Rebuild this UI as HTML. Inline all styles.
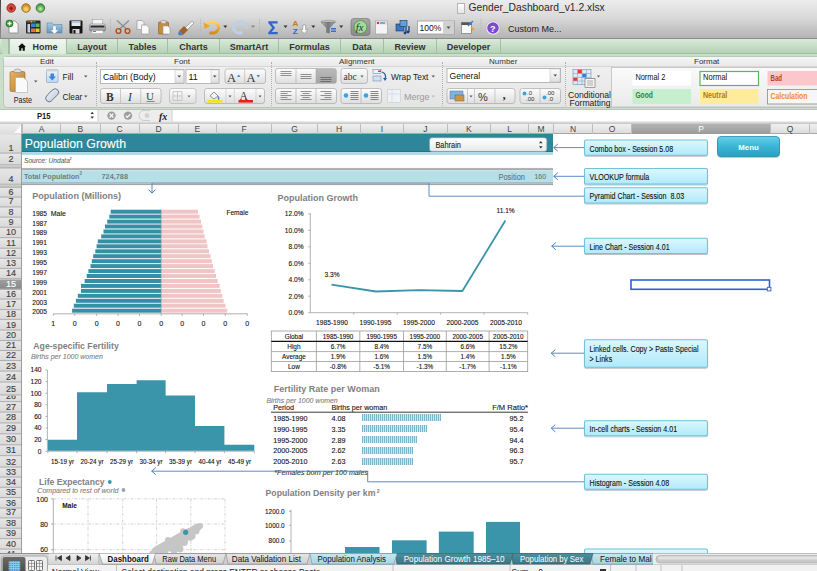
<!DOCTYPE html>
<html><head><meta charset="utf-8">
<style>
*{box-sizing:border-box;margin:0;padding:0}
html,body{width:817px;height:571px;overflow:hidden;background:#fff}
body{position:relative;font-family:"Liberation Sans",sans-serif;color:#222}
.a{position:absolute}
.t{position:absolute;white-space:nowrap;line-height:1}
/* chrome */
#top{left:0;top:0;width:817px;height:39px;background:linear-gradient(#ececec 0%,#dadada 45%,#b4b4b4 100%);border-bottom:1px solid #8a8a8a}
#tabs{left:0;top:39px;width:817px;height:15px;background:linear-gradient(#d9ead9,#b6d1b6);border-bottom:1px solid #9fbf9f}
.tab{position:absolute;top:39px;height:15px;border-right:1px solid #a3bea3;font-size:9px;font-weight:bold;color:#333;text-align:center;line-height:17.2px;overflow:hidden}
#ribbonbg{left:0;top:54px;width:817px;height:56px;background:#c9dfc9}
#ribbon{left:3px;top:56px;width:820px;height:52px;background:linear-gradient(#f2f2f2,#e4e4e4);border:1px solid #b9c9b9;border-radius:4px}
.glab{position:absolute;top:57px;font-size:8px;color:#333;line-height:10px}
.sep{position:absolute;top:62px;width:0;height:44px;border-left:1px dotted #b0b0b0}
.btn{position:absolute;background:linear-gradient(#fbfbfb,#dcdcdc);border:1px solid #a9a9a9;border-radius:3px}
.box{position:absolute;background:#fff;border:1px solid #a7a7a7}
#fbar{left:0;top:109px;width:817px;height:14px;background:#fff;border-top:1px solid #bdbdbd}
/* sheet */
#colhdr{left:0;top:123px;width:817px;height:11px;background:linear-gradient(#f0f0f0,#dcdcdc);border-top:1px solid #c9c9c9;border-bottom:1px solid #a8a8a8}
.ch{position:absolute;top:124px;height:10px;border-left:1px solid #bdbdbd;font-size:8.5px;color:#444;text-align:center;line-height:10px}
#rowhdr{left:0;top:134px;width:22px;height:419px;background:#dfdfdf;border-right:1px solid #a6a6a6}
.rh{position:absolute;left:0;width:22px;border-bottom:1px solid #b3b3b3;font-size:9.5px;color:#444;text-align:center;background:linear-gradient(#e6e6e6,#d9d9d9)}
</style></head>
<body>
<!-- ===== TOP TOOLBAR ===== -->
<div id="top" class="a"></div>
<div class="a" style="left:0;top:0;width:1px;height:110px;background:linear-gradient(#444,#888 30%,#8a9a8a)"></div>
<svg class="a" style="left:0;top:0" width="50" height="16" viewBox="0 0 50 16">
<defs>
<radialGradient id="tlr" cx="50%" cy="55%" r="50%"><stop offset="0" stop-color="#6a1a10"/><stop offset="0.35" stop-color="#b02a22"/><stop offset="0.6" stop-color="#e84a40"/><stop offset="1" stop-color="#c83a30"/></radialGradient>
<radialGradient id="tly" cx="50%" cy="65%" r="50%"><stop offset="0" stop-color="#ffe090"/><stop offset="0.5" stop-color="#f0b848"/><stop offset="1" stop-color="#d08a20"/></radialGradient>
<radialGradient id="tlg" cx="50%" cy="60%" r="50%"><stop offset="0" stop-color="#c8f0b0"/><stop offset="0.5" stop-color="#80c870"/><stop offset="1" stop-color="#3a9a3a"/></radialGradient>
</defs>
<circle cx="11.2" cy="8" r="4.3" fill="url(#tlr)" stroke="#7a3a30" stroke-width="0.8"/>
<circle cx="26" cy="8" r="4.3" fill="url(#tly)" stroke="#8a6a30" stroke-width="0.8"/>
<circle cx="40.4" cy="8" r="4.3" fill="url(#tlg)" stroke="#3a6a3a" stroke-width="0.8"/>
</svg>
<svg class="a" style="left:0;top:0" width="817" height="40" viewBox="0 0 817 40">
<defs>
<linearGradient id="gfold" x1="0" y1="0" x2="0" y2="1"><stop offset="0" stop-color="#a9cde6"/><stop offset="1" stop-color="#5f95bd"/></linearGradient>
<linearGradient id="gprint" x1="0" y1="0" x2="0" y2="1"><stop offset="0" stop-color="#eee"/><stop offset="1" stop-color="#888"/></linearGradient>
<linearGradient id="gund" x1="0" y1="0" x2="0" y2="1"><stop offset="0" stop-color="#ffd36a"/><stop offset="1" stop-color="#d98a10"/></linearGradient>
<linearGradient id="gfun" x1="0" y1="0" x2="1" y2="0"><stop offset="0" stop-color="#bdbdbd"/><stop offset="0.5" stop-color="#777"/><stop offset="1" stop-color="#aaa"/></linearGradient>
<linearGradient id="gfx" x1="0" y1="0" x2="0" y2="1"><stop offset="0" stop-color="#a8a8a8"/><stop offset="1" stop-color="#8a8a8a"/></linearGradient>
</defs>
<!-- new doc -->
<path d="M9 21h6l3 3v9h-9z" fill="#fafafa" stroke="#888" stroke-width="0.8"/>
<circle cx="9.5" cy="23.5" r="3.8" fill="#1d6b1d"/><circle cx="9.5" cy="23.5" r="3" fill="#3aa23a"/>
<path d="M7.5 23.5h4M9.5 21.5v4" stroke="#fff" stroke-width="1.3"/>
<!-- gallery -->
<rect x="26" y="20.5" width="14.5" height="13" rx="1" fill="#2a2a2a"/>
<rect x="27.5" y="24" width="2.5" height="8.5" fill="#bcd3ea"/>
<rect x="31" y="23.5" width="4" height="3.5" fill="#3b7fd6"/><rect x="35.5" y="23.5" width="4" height="3.5" fill="#5cb85c"/>
<rect x="31" y="28.5" width="4" height="3.5" fill="#e8742a"/><rect x="35.5" y="28.5" width="4" height="3.5" fill="#e8c82a"/>
<rect x="27.5" y="21" width="2" height="1.5" fill="#e33"/><rect x="30.5" y="21" width="2" height="1.5" fill="#ea3"/><rect x="33.5" y="21" width="2" height="1.5" fill="#3a3"/>
<!-- folder -->
<path d="M47 23h5l1 1.5h9v8.5h-15z" fill="url(#gfold)" stroke="#5a86a8" stroke-width="0.6"/>
<path d="M53 26v4h-2.5l4 4 4-4h-2.5v-4z" fill="#fff" stroke="#999" stroke-width="0.4"/>
<!-- save -->
<rect x="69.5" y="20.5" width="13" height="13" rx="1" fill="#151515"/>
<rect x="71.5" y="21" width="9" height="5" fill="#e8e8e8"/><rect x="72" y="21.5" width="8" height="1" fill="#7aa6d8"/>
<rect x="72.5" y="29" width="7" height="4.5" fill="#d8d8d8"/><rect x="73.5" y="30" width="2" height="3.5" fill="#151515"/>
<!-- print -->
<rect x="92.5" y="19.5" width="10" height="5" fill="#f4f4f4" stroke="#999" stroke-width="0.5"/>
<rect x="89.5" y="24" width="16" height="7" rx="1.5" fill="url(#gprint)" stroke="#666" stroke-width="0.5"/>
<rect x="90.5" y="25.5" width="14" height="2" fill="#2a2a2a"/>
<rect x="92" y="30.5" width="11" height="3" fill="#f8f8f8" stroke="#999" stroke-width="0.4"/><rect x="93" y="31" width="3" height="1" fill="#3a8ad8"/>
<!-- separators -->
<path d="M110.5 19v16M200.5 19v16M259.5 19v16M481 19v16" stroke="#b5b5b5" stroke-width="1" stroke-dasharray="1 1"/>
<!-- scissors -->
<path d="M117 20.5l10 9M129 20.5l-10 9" stroke="#8c8c8c" stroke-width="1.2"/>
<circle cx="118.5" cy="31" r="2.4" fill="none" stroke="#b0501e" stroke-width="1.4"/>
<circle cx="127.5" cy="31" r="2.4" fill="none" stroke="#b0501e" stroke-width="1.4"/>
<!-- copy -->
<path d="M137 20.5h5l2 2v7h-7z" fill="#f4f4f4" stroke="#999" stroke-width="0.7"/>
<path d="M141.5 25h5l2.5 2.5v6.5h-7.5z" fill="#fafafa" stroke="#999" stroke-width="0.7"/>
<!-- paste -->
<rect x="158.5" y="22" width="10" height="12" rx="1" fill="#c98b3c" stroke="#8a5a1e" stroke-width="0.6"/>
<rect x="161" y="20.5" width="5" height="3" rx="1" fill="#ddd" stroke="#888" stroke-width="0.5"/>
<path d="M163 26h5l2 2v6h-7z" fill="#fafafa" stroke="#999" stroke-width="0.6"/>
<!-- brush -->
<path d="M185 28l7-7 2 2-7 7z" fill="#f2f2f2" stroke="#888" stroke-width="0.6"/>
<path d="M179 31l5-5 4 4-5 5z" fill="#a0622a"/>
<path d="M179 31l4 4-3.5 0.5-1.5-1.5z" fill="#3a7fd8"/>
<!-- undo -->
<path d="M206 25.5a6.5 5.5 0 1 1 3.5 7" fill="none" stroke="url(#gund)" stroke-width="3"/>
<path d="M203.5 22.5l1 6.5 5.5-3z" fill="#e9a52a"/>
<path d="M223.3 25.6h4l-2 2.4z" fill="#333"/>
<!-- redo -->
<path d="M246 25.5a6.5 5.5 0 1 0 -3.5 7" fill="none" stroke="#bcd2e4" stroke-width="3"/>
<path d="M248.5 22.5l-1 6.5-5.5-3z" fill="#b8cfe2"/>
<path d="M251 25.6h4l-2 2.4z" fill="#8a8a8a"/>
<!-- sigma -->
<path d="M268.3 21.2h9.3v2.2h-5.9l3.4 4.3-3.4 4.4h6v2.2h-9.4v-1.8l3.9-4.8-3.9-4.7z" fill="#2f66d0"/>
<path d="M283.5 25.6h4l-2 2.4z" fill="#333"/>
<!-- sort -->
<text x="292.6" y="26.3" font-family="Liberation Sans" font-weight="bold" font-size="8" fill="#c8782a">A</text>
<text x="292.8" y="33.8" font-family="Liberation Sans" font-weight="bold" font-size="8" fill="#2f66d0">Z</text>
<path d="M302.8 25v4.5h-2.3l3.7 4 3.7-4h-2.3v-4.5z" fill="#fff" stroke="#8a8a8a" stroke-width="0.6"/>
<path d="M311.3 25.6h4l-2 2.4z" fill="#333"/>
<!-- filter -->
<ellipse cx="328.5" cy="21.8" rx="7.5" ry="1.5" fill="#d8d8d8" stroke="#777" stroke-width="0.5"/><path d="M321 22l5.5 6v4.5l3 0.5v-5l5.5-6z" fill="url(#gfun)" stroke="#666" stroke-width="0.5"/>
<rect x="331" y="28" width="5" height="1.4" fill="#2f66d0"/><rect x="331" y="30.5" width="5" height="1.4" fill="#2f66d0"/>
<path d="M339.2 25.6h4l-2 2.4z" fill="#333"/>
<!-- fx -->
<rect x="351" y="18.5" width="19" height="17" rx="3" fill="url(#gfx)" stroke="#6e6e6e" stroke-width="0.6"/>
<circle cx="360.5" cy="27" r="6.5" fill="#a6d89a" stroke="#4c8f45" stroke-width="0.8"/>
<text x="355.8" y="30.8" font-family="Liberation Serif" font-style="italic" font-size="10.5" fill="#234">fx</text>
<!-- doc icon -->
<rect x="375.5" y="21" width="12" height="13" fill="#f4f4f4" stroke="#999" stroke-width="0.6"/>
<rect x="376" y="21.5" width="11" height="3" fill="#ddd"/><rect x="377" y="22" width="2" height="2" fill="#d33"/><rect x="380" y="22" width="5" height="2" fill="#7aa6d8"/>
<!-- media -->
<rect x="396" y="24" width="8" height="7" fill="#3a78c8" stroke="#234" stroke-width="0.6"/>
<rect x="400" y="20.5" width="7" height="6" fill="#5fa0e0" stroke="#234" stroke-width="0.6"/>
<path d="M406 27v6M409 26v6" stroke="#1d3f7a" stroke-width="1.3"/><circle cx="405" cy="33" r="1.4" fill="#1d3f7a"/><circle cx="408" cy="32" r="1.4" fill="#1d3f7a"/>
<!-- zoom box -->
<rect x="417.5" y="21" width="37" height="13" fill="#fff" stroke="#9c9c9c" stroke-width="0.8"/>
<rect x="443" y="21.5" width="11" height="12" fill="#d0d0d0"/>
<path d="M446.5 26.5h4l-2 2.5z" fill="#555"/>
<text x="419.5" y="31" font-family="Liberation Sans" font-size="8.5" fill="#111">100%</text>
<!-- custom icon -->
<rect x="461.5" y="22.5" width="10" height="11" fill="#fafafa" stroke="#777" stroke-width="0.7"/>
<rect x="461.5" y="22.5" width="10" height="2.5" fill="#555"/>
<path d="M468 26l5-5" stroke="#3a7fd8" stroke-width="1.5"/><path d="M471 27l3 3" stroke="#e89a30" stroke-width="1.5"/>
<!-- help -->
<circle cx="493" cy="28" r="7" fill="#fff" stroke="#aaa" stroke-width="0.6"/>
<circle cx="493" cy="28" r="5.8" fill="#7c4bc9"/>
<text x="490" y="31.5" font-family="Liberation Sans" font-weight="bold" font-size="9" fill="#fff">?</text>
<text x="508" y="31.5" font-family="Liberation Sans" font-size="9" fill="#222">Custom Me...</text>
</svg>
<div class="t" style="left:468.5px;top:3.2px;font-size:10.3px;color:#2a2a2a">Gender_Dashboard_v1.2.xlsx</div>
<div class="a" style="left:457px;top:3px;width:8px;height:10.5px;background:linear-gradient(#fff,#e6e6e6);border:1px solid #b5b5b5"></div>

<!-- ===== TABS ===== -->
<div id="tabs" class="a"></div>
<div class="tab" style="left:2px;width:7px;background:#c5dcc5"></div>
<div class="tab" style="left:9px;width:58px;background:linear-gradient(#f0f6f0,#dcebdc);border-left:1px solid #a3bea3"><svg width="8" height="8" viewBox="0 0 8 8" style="vertical-align:-0.5px;margin-right:6px"><path d="M4 0.3L0 4h1.2v3.7h2.1V5.3h1.4v2.4h2.1V4H8z" fill="#111"/></svg>Home</div>
<div class="tab" style="left:67px;width:51px">Layout</div>
<div class="tab" style="left:118px;width:50px">Tables</div>
<div class="tab" style="left:168px;width:52px">Charts</div>
<div class="tab" style="left:220px;width:59px">SmartArt</div>
<div class="tab" style="left:279px;width:62px">Formulas</div>
<div class="tab" style="left:341px;width:43px">Data</div>
<div class="tab" style="left:384px;width:53px">Review</div>
<div class="tab" style="left:437px;width:64px">Developer</div>

<!-- ===== RIBBON ===== -->
<div id="ribbonbg" class="a"></div>
<div id="ribbon" class="a"></div>
<div class="a" style="left:4px;top:57px;width:813px;height:10px;background:linear-gradient(#f6f6f6,#e9e9e9);border-bottom:1px solid #d6d6d6"></div>


<div class="glab" style="left:40px;top:57px">Edit</div>
<div class="glab" style="left:174px;top:57px">Font</div>
<div class="glab" style="left:339px;top:57px">Alignment</div>
<div class="glab" style="left:489px;top:57px">Number</div>
<div class="glab" style="left:694px;top:57px">Format</div>
<div class="sep" style="left:96px"></div>
<div class="sep" style="left:271px"></div>
<div class="sep" style="left:442px"></div>
<div class="sep" style="left:565px"></div>
<svg class="a" style="left:0;top:56px" width="817" height="54" viewBox="0 56 817 54">
<defs>
<linearGradient id="gclip" x1="0" y1="0" x2="1" y2="1"><stop offset="0" stop-color="#e9b463"/><stop offset="1" stop-color="#b57a2c"/></linearGradient>
<linearGradient id="gers" x1="0" y1="0" x2="1" y2="1"><stop offset="0" stop-color="#f4f8fc"/><stop offset="1" stop-color="#b8c8d8"/></linearGradient>
<linearGradient id="gfill" x1="0" y1="0" x2="0" y2="1"><stop offset="0" stop-color="#f0f6fc"/><stop offset="1" stop-color="#bcd8f2"/></linearGradient>
<linearGradient id="gbtn" x1="0" y1="0" x2="0" y2="1"><stop offset="0" stop-color="#fdfdfd"/><stop offset="1" stop-color="#dedede"/></linearGradient>
<linearGradient id="gbtnd" x1="0" y1="0" x2="0" y2="1"><stop offset="0" stop-color="#b9b9b9"/><stop offset="1" stop-color="#a5a5a5"/></linearGradient>
<linearGradient id="gcf" x1="0" y1="0" x2="0" y2="1"><stop offset="0" stop-color="#fafafa"/><stop offset="1" stop-color="#eaeaea"/></linearGradient>
</defs>
<!-- Paste -->
<rect x="10" y="71.5" width="15" height="20" rx="1.5" fill="url(#gclip)" stroke="#9a6a28" stroke-width="0.6"/>
<path d="M14 72.5h7v-1.5a3.5 2 0 0 0 -7 0z" fill="#ddd" stroke="#888" stroke-width="0.6"/>
<path d="M15.5 77.5h8l4 4v11h-12z" fill="#fafafa" stroke="#aaa" stroke-width="0.6"/>
<path d="M34 80.5h3.5l-1.75 2z" fill="#555"/>
<text x="13.7" y="103" font-family="Liberation Sans" font-size="8.6" fill="#222" textLength="18.4" lengthAdjust="spacingAndGlyphs">Paste</text>
<!-- Fill -->
<rect x="46.5" y="69.5" width="11.5" height="13" rx="1" fill="url(#gfill)" stroke="#7e9cb8" stroke-width="0.6"/>
<rect x="46.5" y="69.5" width="11.5" height="2" fill="#d5d5d5"/>
<path d="M50.5 73.5h3.5v3h2l-3.75 4-3.75-4h2z" fill="#3c86d8"/>
<text x="62.5" y="79.5" font-family="Liberation Sans" font-size="8.5" fill="#222">Fill</text>
<path d="M84 75.5h3.5l-1.75 2z" fill="#555"/>
<!-- Clear -->
<path d="M49.8 92.3l3.2-2.6a3.4 3.4 0 0 1 4.8 4.8l-6.4 6.4a3.4 3.4 0 0 1 -4.8 -4.8z" fill="url(#gers)" stroke="#5a6a7a" stroke-width="0.9"/>
<text x="62.5" y="100" font-family="Liberation Sans" font-size="8.3" fill="#222">Clear</text>
<path d="M84 95.5h3.5l-1.75 2z" fill="#555"/>
<!-- Font name -->
<rect x="100.5" y="69.5" width="83.5" height="14" fill="#fff" stroke="#a9a9a9" stroke-width="0.8"/>
<rect x="175" y="70" width="8.5" height="13" fill="url(#gbtn)" stroke="#bdbdbd" stroke-width="0.5"/>
<path d="M177.5 75.5h3.5l-1.75 2z" fill="#444"/>
<text x="103" y="80" font-family="Liberation Sans" font-size="8.7" fill="#111">Calibri (Body)</text>
<rect x="186" y="69.5" width="33" height="14" fill="#fff" stroke="#a9a9a9" stroke-width="0.8"/>
<rect x="211" y="70" width="7.5" height="13" fill="url(#gbtn)" stroke="#bdbdbd" stroke-width="0.5"/>
<path d="M213 75.5h3.5l-1.75 2z" fill="#444"/>
<text x="188.5" y="80" font-family="Liberation Sans" font-size="9" fill="#111">11</text>
<rect x="225" y="69" width="40.5" height="14.5" rx="2.5" fill="url(#gbtn)" stroke="#a9a9a9" stroke-width="0.7"/>
<path d="M244.7 69v14.5" stroke="#b9b9b9" stroke-width="0.7"/>
<text x="227" y="81.5" font-family="Liberation Serif" font-size="12.5" fill="#333">A</text>
<path d="M237 77h3.5l-1.75-2.5z" fill="#3a8ad8"/>
<text x="246.5" y="81.5" font-family="Liberation Serif" font-size="12.5" fill="#333">A</text>
<path d="M256.5 75h3.5l-1.75 2.5z" fill="#3a8ad8"/>
<!-- B I U -->
<rect x="100.5" y="88.5" width="60.5" height="15" rx="2.5" fill="url(#gbtn)" stroke="#a9a9a9" stroke-width="0.7"/>
<path d="M120.5 88.5v15M140.7 88.5v15" stroke="#b9b9b9" stroke-width="0.7"/>
<text x="106" y="101" font-family="Liberation Serif" font-weight="bold" font-size="11.5" fill="#333">B</text>
<text x="128" y="101" font-family="Liberation Serif" font-style="italic" font-size="11.5" fill="#333">I</text>
<text x="146" y="100.3" font-family="Liberation Serif" font-size="11" fill="#444">U</text>
<path d="M146.5 101.5h8" stroke="#444" stroke-width="0.6"/>
<!-- borders -->
<rect x="169.5" y="88.5" width="26.5" height="15" rx="2.5" fill="url(#gbtn)" stroke="#b5b5b5" stroke-width="0.7"/>
<path d="M173 91.5h9v9h-9zM177.5 91.5v9M173 96h9" fill="none" stroke="#bbb" stroke-width="0.7"/>
<path d="M187.5 95.5h3l-1.5 2z" fill="#666"/>
<!-- fill color / font color -->
<rect x="204.5" y="88.5" width="60" height="15" rx="2.5" fill="url(#gbtn)" stroke="#a9a9a9" stroke-width="0.7"/>
<path d="M226 88.5v15M234.3 88.5v15M256 88.5v15" stroke="#c5c5c5" stroke-width="0.6"/>
<path d="M210 96l4-4 4 4-4 3z" fill="#f4f4f4" stroke="#555" stroke-width="0.6"/>
<path d="M218 96.5q1.5 2 0 3" stroke="#3a7fd8" stroke-width="1.4" fill="none"/>
<rect x="207.5" y="100" width="15" height="2.6" fill="#f7e416"/>
<path d="M228.5 95.5h3l-1.5 2z" fill="#555"/>
<text x="239.5" y="99.8" font-family="Liberation Serif" font-size="11.5" fill="#333">A</text>
<rect x="238.5" y="100" width="14.5" height="2.6" fill="#e2231a"/>
<path d="M258.5 95.5h3l-1.5 2z" fill="#555"/>
<!-- alignment row1 -->
<rect x="275.5" y="68.5" width="61" height="15" rx="2.5" fill="url(#gbtn)" stroke="#a9a9a9" stroke-width="0.7"/>
<rect x="316" y="69" width="20" height="14" fill="url(#gbtnd)"/>
<path d="M296 68.5v15M316 68.5v15" stroke="#b0b0b0" stroke-width="0.7"/>
<path d="M280.5 71.5h11M280.5 73.5h11M280.5 75.5h11" stroke="#666" stroke-width="0.7"/>
<path d="M300.5 74.5h11M300.5 76.5h11M300.5 78.5h11" stroke="#666" stroke-width="0.7"/>
<path d="M320.5 77.5h11M320.5 79.5h11M320.5 81.5h11" stroke="#555" stroke-width="0.7"/>
<rect x="341" y="68.5" width="26.5" height="15" rx="2.5" fill="url(#gbtn)" stroke="#a9a9a9" stroke-width="0.7"/>
<text x="343.5" y="79.5" font-family="Liberation Serif" font-size="9.5" fill="#333">abc</text>
<path d="M360.5 75.5h3l-1.5 2z" fill="#555"/>
<rect x="373" y="69.5" width="8" height="4" fill="#eef3f8" stroke="#6f8fb0" stroke-width="0.6"/>
<rect x="373" y="76" width="8" height="5" fill="#cfe0f0" stroke="#6f8fb0" stroke-width="0.6"/>
<path d="M382 72q5 2 3 7" stroke="#2e5faa" stroke-width="1.3" fill="none"/><path d="M383 78l2 3 2-3z" fill="#2e5faa"/>
<rect x="378" y="70.5" width="3" height="1.5" fill="#e33"/>
<text x="391" y="80" font-family="Liberation Sans" font-size="8.4" fill="#222">Wrap Text</text>
<path d="M431.5 75.5h3.5l-1.75 2z" fill="#555"/>
<!-- alignment row2 -->
<rect x="275.5" y="88.5" width="61" height="15" rx="2.5" fill="url(#gbtn)" stroke="#a9a9a9" stroke-width="0.7"/>
<path d="M296 88.5v15M316 88.5v15" stroke="#b0b0b0" stroke-width="0.7"/>
<path d="M280.5 91.5h11M280.5 93.5h7M280.5 95.5h11M280.5 97.5h7M280.5 99.5h11" stroke="#666" stroke-width="0.7"/>
<path d="M300.5 91.5h11M302.5 93.5h7M300.5 95.5h11M302.5 97.5h7M300.5 99.5h11" stroke="#666" stroke-width="0.7"/>
<path d="M320.5 91.5h11M324.5 93.5h7M320.5 95.5h11M324.5 97.5h7M320.5 99.5h11" stroke="#666" stroke-width="0.7"/>
<rect x="341" y="88.5" width="40.5" height="15" rx="2.5" fill="url(#gbtn)" stroke="#a9a9a9" stroke-width="0.7"/>
<path d="M361 88.5v15" stroke="#b0b0b0" stroke-width="0.7"/>
<path d="M350.5 91.5h8M350.5 93.5h8M350.5 95.5h8M350.5 97.5h8M350.5 99.5h8" stroke="#555" stroke-width="0.7"/>
<circle cx="346" cy="95.5" r="2.3" fill="#3ba3e0"/>
<path d="M370.5 91.5h8M370.5 93.5h8M370.5 95.5h8M370.5 97.5h8M370.5 99.5h8" stroke="#555" stroke-width="0.7"/>
<circle cx="366" cy="95.5" r="2.3" fill="#3ba3e0"/>
<rect x="387.5" y="89.5" width="13" height="13" fill="#eef2f6" stroke="#c5ccd4" stroke-width="0.6"/>
<path d="M387.5 94h13M392 89.5v13" stroke="#c9d3dd" stroke-width="0.6"/>
<text x="404" y="100" font-family="Liberation Sans" font-size="9" fill="#9a9a9a">Merge</text>
<path d="M431.5 95.5h3.5l-1.75 2z" fill="#bbb"/>
<!-- number -->
<rect x="447" y="68.5" width="113.5" height="14" fill="#fff" stroke="#a9a9a9" stroke-width="0.8"/>
<rect x="550" y="69" width="10" height="13" fill="url(#gbtn)" stroke="#bdbdbd" stroke-width="0.5"/>
<path d="M553.5 74.5h3.5l-1.75 2z" fill="#444"/>
<text x="449.5" y="79" font-family="Liberation Sans" font-size="8.6" fill="#111">General</text>
<rect x="447" y="88.5" width="68" height="15" rx="2.5" fill="url(#gbtn)" stroke="#a9a9a9" stroke-width="0.7"/>
<path d="M467.5 88.5v15M474.5 88.5v15M495 88.5v15" stroke="#b9b9b9" stroke-width="0.7"/>
<rect x="450" y="91" width="13" height="8" fill="#7eb3e0" stroke="#4a78a8" stroke-width="0.5"/>
<rect x="455" y="95" width="9" height="6" fill="#c8964a" stroke="#8a5a1e" stroke-width="0.5"/>
<path d="M469.5 95.5h3l-1.5 2z" fill="#555"/>
<text x="478" y="100.5" font-family="Liberation Sans" font-size="11" fill="#333">%</text>
<text x="502.5" y="99" font-family="Liberation Serif" font-weight="bold" font-size="13" fill="#333">,</text>
<rect x="520" y="88.5" width="40.5" height="15" rx="2.5" fill="url(#gbtn)" stroke="#a9a9a9" stroke-width="0.7"/>
<path d="M540 88.5v15" stroke="#b9b9b9" stroke-width="0.7"/>
<circle cx="524.5" cy="93.5" r="2" fill="#3ba3e0"/>
<text x="527" y="95" font-family="Liberation Sans" font-size="6" fill="#333">.0</text>
<text x="526" y="101" font-family="Liberation Sans" font-size="6" fill="#333">.00</text>
<circle cx="544.5" cy="97.5" r="2" fill="#3ba3e0"/>
<text x="546" y="95" font-family="Liberation Sans" font-size="6" fill="#333">.00</text>
<text x="548" y="101" font-family="Liberation Sans" font-size="6" fill="#333">.0</text>
<!-- conditional formatting -->
<rect x="573" y="69.5" width="18" height="15" fill="#ddeaf6" stroke="#6f8fb0" stroke-width="0.6"/>
<path d="M573 73.5h18M573 77.5h18M573 81h18M577.5 69.5v15M582 69.5v15M586.5 69.5v15" stroke="#8aa8c8" stroke-width="0.6"/>
<rect x="577.8" y="69.8" width="4" height="3.5" fill="#e33"/><rect x="573.3" y="77.8" width="4" height="3" fill="#e33"/><rect x="582.3" y="73.8" width="4" height="3.5" fill="#3a7fd8"/>
<rect x="585" y="78.5" width="10" height="9" fill="#f4f4f4" stroke="#666" stroke-width="0.6"/>
<path d="M587 81h6M587 83h6M587 85h6" stroke="#666" stroke-width="0.5"/>
<path d="M597 75.5h3l-1.5 2z" fill="#555"/>
<text x="568" y="98" font-family="Liberation Sans" font-size="8.6" fill="#222">Conditional</text>
<text x="569.5" y="106" font-family="Liberation Sans" font-size="8.6" fill="#222">Formatting</text>
<!-- format gallery -->
<rect x="611.5" y="67.5" width="220" height="39.5" fill="url(#gcf)" stroke="#bdbdbd" stroke-width="0.8"/>
<rect x="632.5" y="71" width="58.5" height="14.5" fill="#fff"/>
<text x="635.4" y="80.3" font-family="Liberation Sans" font-size="8.4" fill="#111" textLength="30" lengthAdjust="spacingAndGlyphs">Normal 2</text>
<rect x="700" y="71.5" width="58.5" height="14" fill="#fff" stroke="#5fb35f" stroke-width="1.2"/>
<text x="703" y="80.3" font-family="Liberation Sans" font-size="8.4" fill="#111" textLength="24.3" lengthAdjust="spacingAndGlyphs">Normal</text>
<rect x="767.5" y="71" width="60" height="14.5" fill="#fcc6cd"/>
<text x="770.6" y="80.6" font-family="Liberation Sans" font-weight="bold" font-size="8.4" fill="#c0392b" textLength="11.5" lengthAdjust="spacingAndGlyphs">Bad</text>
<rect x="632.5" y="89" width="58.5" height="15" fill="#c6efce"/>
<text x="635.4" y="98.3" font-family="Liberation Sans" font-weight="bold" font-size="8.2" fill="#3d7a3d" textLength="17.5" lengthAdjust="spacingAndGlyphs">Good</text>
<rect x="700" y="89" width="58.5" height="15" fill="#ffeb9c"/>
<text x="703" y="98.3" font-family="Liberation Sans" font-weight="bold" font-size="8.2" fill="#b07a10" textLength="24.3" lengthAdjust="spacingAndGlyphs">Neutral</text>
<rect x="767.5" y="89.5" width="60" height="14.5" fill="#f6f6f6" stroke="#8a8a8a" stroke-width="0.8"/>
<text x="770.5" y="98.5" font-family="Liberation Sans" font-weight="bold" font-size="8.6" fill="#f08a1c" textLength="37" lengthAdjust="spacingAndGlyphs">Calculation</text>
</svg>

<!-- ===== FORMULA BAR ===== -->

<svg class="a" style="left:0;top:109px" width="817" height="15" viewBox="0 109 817 15">
<rect x="0" y="109" width="817" height="13" fill="#fff"/>
<rect x="98" y="109.5" width="74" height="12" fill="#ededed"/>
<rect x="0" y="121.5" width="817" height="2" fill="#d8d8d8"/>
<path d="M0 109.5h817" stroke="#c0c0c0" stroke-width="1"/>
<path d="M98 109.5v12M172 109.5v12" stroke="#c6c6c6" stroke-width="0.8"/>
<text x="37" y="119.3" font-family="Liberation Sans" font-size="9" font-weight="bold" fill="#222" textLength="13.6" lengthAdjust="spacingAndGlyphs">P15</text>
<path d="M90.5 114l1.7-2.2 1.7 2.2zM90.5 116.5l1.7 2.2 1.7-2.2z" fill="#333"/>
<circle cx="111.5" cy="115.6" r="4.2" fill="#9d9d9d"/><path d="M109.6 113.7l3.8 3.8M113.4 113.7l-3.8 3.8" stroke="#fff" stroke-width="1.2"/>
<circle cx="128" cy="115.6" r="4.2" fill="#9d9d9d"/><path d="M125.8 115.6l1.6 1.8 2.9-3.3" stroke="#fff" stroke-width="1.2" fill="none"/>
<path d="M150 110.5h-6a5 5 0 0 0 0 10h6" fill="none" stroke="#c4c4c4" stroke-width="0.8"/>
<circle cx="147" cy="115.6" r="2.5" fill="#d4d4d4"/>
<text x="159" y="119.6" font-family="Liberation Serif" font-style="italic" font-weight="bold" font-size="10" fill="#222">fx</text>
</svg>


<!-- ===== SHEET ===== -->
<div id="colhdr" class="a"></div>
<svg id="rhsvg" class="a" style="left:0;top:134px" width="23" height="419" viewBox="0 134 23 419">
<defs><linearGradient id="grh" x1="0" y1="0" x2="0" y2="1"><stop offset="0" stop-color="#e6e6e6"/><stop offset="1" stop-color="#d8d8d8"/></linearGradient>
<linearGradient id="grhs" x1="0" y1="0" x2="0" y2="1"><stop offset="0" stop-color="#9e9e9e"/><stop offset="1" stop-color="#888"/></linearGradient></defs>
<rect x="0" y="134" width="22" height="419" fill="#dcdcdc"/>
<rect x="0" y="134.6" width="21.5" height="18.8" fill="url(#grh)"/>
<path d="M0 153.0H21.5" stroke="#ababab" stroke-width="0.9"/>
<clipPath id="rc0"><rect x="0" y="134.5" width="22" height="18.9"/></clipPath>
<text x="11" y="150.5" text-anchor="middle" font-family="Liberation Sans" font-size="9" fill="#444" stroke="#444" stroke-width="0.15" clip-path="url(#rc0)">1</text>
<rect x="0" y="154.0" width="21.5" height="11.2" fill="url(#grh)"/>
<path d="M0 164.8H21.5" stroke="#ababab" stroke-width="0.9"/>
<clipPath id="rc1"><rect x="0" y="153.9" width="22" height="11.3"/></clipPath>
<text x="11" y="162.3" text-anchor="middle" font-family="Liberation Sans" font-size="9" fill="#444" stroke="#444" stroke-width="0.15" clip-path="url(#rc1)">2</text>
<rect x="0" y="165.8" width="21.5" height="2.5" fill="#c9c9c9"/>
<path d="M0 167.9H21.5" stroke="#ababab" stroke-width="0.9"/>
<rect x="0" y="168.9" width="21.5" height="15.7" fill="url(#grh)"/>
<path d="M0 184.2H21.5" stroke="#ababab" stroke-width="0.9"/>
<clipPath id="rc3"><rect x="0" y="168.8" width="22" height="15.8"/></clipPath>
<text x="11" y="181.7" text-anchor="middle" font-family="Liberation Sans" font-size="9" fill="#444" stroke="#444" stroke-width="0.15" clip-path="url(#rc3)">4</text>
<rect x="0" y="185.2" width="21.5" height="2.4" fill="#c9c9c9"/>
<path d="M0 187.2H21.5" stroke="#ababab" stroke-width="0.9"/>
<rect x="0" y="188.2" width="21.5" height="9.2" fill="url(#grh)"/>
<path d="M0 197.0H21.5" stroke="#ababab" stroke-width="0.9"/>
<clipPath id="rc5"><rect x="0" y="188.1" width="22" height="9.3"/></clipPath>
<text x="11" y="194.5" text-anchor="middle" font-family="Liberation Sans" font-size="9" fill="#444" stroke="#444" stroke-width="0.15" clip-path="url(#rc5)">6</text>
<rect x="0" y="198.0" width="21.5" height="9.3" fill="url(#grh)"/>
<path d="M0 206.9H21.5" stroke="#ababab" stroke-width="0.9"/>
<clipPath id="rc6"><rect x="0" y="197.9" width="22" height="9.4"/></clipPath>
<text x="11" y="204.4" text-anchor="middle" font-family="Liberation Sans" font-size="9" fill="#444" stroke="#444" stroke-width="0.15" clip-path="url(#rc6)">7</text>
<rect x="0" y="207.9" width="21.5" height="9.6" fill="url(#grh)"/>
<path d="M0 217.1H21.5" stroke="#ababab" stroke-width="0.9"/>
<clipPath id="rc7"><rect x="0" y="207.8" width="22" height="9.7"/></clipPath>
<text x="11" y="214.6" text-anchor="middle" font-family="Liberation Sans" font-size="9" fill="#444" stroke="#444" stroke-width="0.15" clip-path="url(#rc7)">8</text>
<rect x="0" y="218.1" width="21.5" height="9.5" fill="url(#grh)"/>
<path d="M0 227.2H21.5" stroke="#ababab" stroke-width="0.9"/>
<clipPath id="rc8"><rect x="0" y="218.0" width="22" height="9.6"/></clipPath>
<text x="11" y="224.7" text-anchor="middle" font-family="Liberation Sans" font-size="9" fill="#444" stroke="#444" stroke-width="0.15" clip-path="url(#rc8)">9</text>
<rect x="0" y="228.2" width="21.5" height="9.8" fill="url(#grh)"/>
<path d="M0 237.6H21.5" stroke="#ababab" stroke-width="0.9"/>
<clipPath id="rc9"><rect x="0" y="228.1" width="22" height="9.9"/></clipPath>
<text x="11" y="235.1" text-anchor="middle" font-family="Liberation Sans" font-size="9" fill="#444" stroke="#444" stroke-width="0.15" clip-path="url(#rc9)">10</text>
<rect x="0" y="238.6" width="21.5" height="10.0" fill="url(#grh)"/>
<path d="M0 248.2H21.5" stroke="#ababab" stroke-width="0.9"/>
<clipPath id="rc10"><rect x="0" y="238.5" width="22" height="10.1"/></clipPath>
<text x="11" y="245.7" text-anchor="middle" font-family="Liberation Sans" font-size="9" fill="#444" stroke="#444" stroke-width="0.15" clip-path="url(#rc10)">11</text>
<rect x="0" y="249.2" width="21.5" height="9.4" fill="url(#grh)"/>
<path d="M0 258.2H21.5" stroke="#ababab" stroke-width="0.9"/>
<clipPath id="rc11"><rect x="0" y="249.1" width="22" height="9.5"/></clipPath>
<text x="11" y="255.7" text-anchor="middle" font-family="Liberation Sans" font-size="9" fill="#444" stroke="#444" stroke-width="0.15" clip-path="url(#rc11)">12</text>
<rect x="0" y="259.2" width="21.5" height="9.6" fill="url(#grh)"/>
<path d="M0 268.4H21.5" stroke="#ababab" stroke-width="0.9"/>
<clipPath id="rc12"><rect x="0" y="259.1" width="22" height="9.7"/></clipPath>
<text x="11" y="265.9" text-anchor="middle" font-family="Liberation Sans" font-size="9" fill="#444" stroke="#444" stroke-width="0.15" clip-path="url(#rc12)">13</text>
<rect x="0" y="269.4" width="21.5" height="9.6" fill="url(#grh)"/>
<path d="M0 278.6H21.5" stroke="#ababab" stroke-width="0.9"/>
<clipPath id="rc13"><rect x="0" y="269.3" width="22" height="9.7"/></clipPath>
<text x="11" y="276.1" text-anchor="middle" font-family="Liberation Sans" font-size="9" fill="#444" stroke="#444" stroke-width="0.15" clip-path="url(#rc13)">14</text>
<rect x="0" y="279.6" width="21.5" height="9.8" fill="url(#grhs)"/>
<path d="M0 289.0H21.5" stroke="#ababab" stroke-width="0.9"/>
<clipPath id="rc14"><rect x="0" y="279.5" width="22" height="9.9"/></clipPath>
<text x="11" y="286.5" text-anchor="middle" font-family="Liberation Sans" font-size="9" fill="#fff" stroke="#fff" stroke-width="0.15" clip-path="url(#rc14)">15</text>
<rect x="0" y="290.0" width="21.5" height="9.4" fill="url(#grh)"/>
<path d="M0 299.0H21.5" stroke="#ababab" stroke-width="0.9"/>
<clipPath id="rc15"><rect x="0" y="289.9" width="22" height="9.5"/></clipPath>
<text x="11" y="296.5" text-anchor="middle" font-family="Liberation Sans" font-size="9" fill="#444" stroke="#444" stroke-width="0.15" clip-path="url(#rc15)">16</text>
<rect x="0" y="300.0" width="21.5" height="10.0" fill="url(#grh)"/>
<path d="M0 309.6H21.5" stroke="#ababab" stroke-width="0.9"/>
<clipPath id="rc16"><rect x="0" y="299.9" width="22" height="10.1"/></clipPath>
<text x="11" y="307.1" text-anchor="middle" font-family="Liberation Sans" font-size="9" fill="#444" stroke="#444" stroke-width="0.15" clip-path="url(#rc16)">17</text>
<rect x="0" y="310.6" width="21.5" height="9.2" fill="url(#grh)"/>
<path d="M0 319.4H21.5" stroke="#ababab" stroke-width="0.9"/>
<clipPath id="rc17"><rect x="0" y="310.5" width="22" height="9.3"/></clipPath>
<text x="11" y="316.9" text-anchor="middle" font-family="Liberation Sans" font-size="9" fill="#444" stroke="#444" stroke-width="0.15" clip-path="url(#rc17)">18</text>
<rect x="0" y="320.4" width="21.5" height="10.0" fill="url(#grh)"/>
<path d="M0 330.0H21.5" stroke="#ababab" stroke-width="0.9"/>
<clipPath id="rc18"><rect x="0" y="320.3" width="22" height="10.1"/></clipPath>
<text x="11" y="327.5" text-anchor="middle" font-family="Liberation Sans" font-size="9" fill="#444" stroke="#444" stroke-width="0.15" clip-path="url(#rc18)">19</text>
<rect x="0" y="331.0" width="21.5" height="9.9" fill="url(#grh)"/>
<path d="M0 340.5H21.5" stroke="#ababab" stroke-width="0.9"/>
<clipPath id="rc19"><rect x="0" y="330.9" width="22" height="10.0"/></clipPath>
<text x="11" y="338.0" text-anchor="middle" font-family="Liberation Sans" font-size="9" fill="#444" stroke="#444" stroke-width="0.15" clip-path="url(#rc19)">20</text>
<rect x="0" y="341.5" width="21.5" height="9.4" fill="url(#grh)"/>
<path d="M0 350.5H21.5" stroke="#ababab" stroke-width="0.9"/>
<clipPath id="rc20"><rect x="0" y="341.4" width="22" height="9.5"/></clipPath>
<text x="11" y="348.0" text-anchor="middle" font-family="Liberation Sans" font-size="9" fill="#444" stroke="#444" stroke-width="0.15" clip-path="url(#rc20)">21</text>
<rect x="0" y="351.5" width="21.5" height="9.4" fill="url(#grh)"/>
<path d="M0 360.5H21.5" stroke="#ababab" stroke-width="0.9"/>
<clipPath id="rc21"><rect x="0" y="351.4" width="22" height="9.5"/></clipPath>
<text x="11" y="358.0" text-anchor="middle" font-family="Liberation Sans" font-size="9" fill="#444" stroke="#444" stroke-width="0.15" clip-path="url(#rc21)">22</text>
<rect x="0" y="361.5" width="21.5" height="9.9" fill="url(#grh)"/>
<path d="M0 371.0H21.5" stroke="#ababab" stroke-width="0.9"/>
<clipPath id="rc22"><rect x="0" y="361.4" width="22" height="10.0"/></clipPath>
<text x="11" y="368.5" text-anchor="middle" font-family="Liberation Sans" font-size="9" fill="#444" stroke="#444" stroke-width="0.15" clip-path="url(#rc22)">23</text>
<rect x="0" y="372.0" width="21.5" height="10.4" fill="url(#grh)"/>
<path d="M0 382.0H21.5" stroke="#ababab" stroke-width="0.9"/>
<clipPath id="rc23"><rect x="0" y="371.9" width="22" height="10.5"/></clipPath>
<text x="11" y="379.5" text-anchor="middle" font-family="Liberation Sans" font-size="9" fill="#444" stroke="#444" stroke-width="0.15" clip-path="url(#rc23)">24</text>
<rect x="0" y="383.0" width="21.5" height="12.3" fill="url(#grh)"/>
<path d="M0 394.9H21.5" stroke="#ababab" stroke-width="0.9"/>
<clipPath id="rc24"><rect x="0" y="382.9" width="22" height="12.4"/></clipPath>
<text x="11" y="392.4" text-anchor="middle" font-family="Liberation Sans" font-size="9" fill="#444" stroke="#444" stroke-width="0.15" clip-path="url(#rc24)">25</text>
<rect x="0" y="395.9" width="21.5" height="6.1" fill="url(#grh)"/>
<path d="M0 401.6H21.5" stroke="#ababab" stroke-width="0.9"/>
<clipPath id="rc25"><rect x="0" y="395.8" width="22" height="6.2"/></clipPath>
<text x="11" y="399.1" text-anchor="middle" font-family="Liberation Sans" font-size="9" fill="#444" stroke="#444" stroke-width="0.15" clip-path="url(#rc25)">26</text>
<rect x="0" y="402.6" width="21.5" height="9.8" fill="url(#grh)"/>
<path d="M0 412.0H21.5" stroke="#ababab" stroke-width="0.9"/>
<clipPath id="rc26"><rect x="0" y="402.5" width="22" height="9.9"/></clipPath>
<text x="11" y="409.5" text-anchor="middle" font-family="Liberation Sans" font-size="9" fill="#444" stroke="#444" stroke-width="0.15" clip-path="url(#rc26)">27</text>
<rect x="0" y="413.0" width="21.5" height="10.3" fill="url(#grh)"/>
<path d="M0 422.9H21.5" stroke="#ababab" stroke-width="0.9"/>
<clipPath id="rc27"><rect x="0" y="412.9" width="22" height="10.4"/></clipPath>
<text x="11" y="420.4" text-anchor="middle" font-family="Liberation Sans" font-size="9" fill="#444" stroke="#444" stroke-width="0.15" clip-path="url(#rc27)">28</text>
<rect x="0" y="423.9" width="21.5" height="10.3" fill="url(#grh)"/>
<path d="M0 433.8H21.5" stroke="#ababab" stroke-width="0.9"/>
<clipPath id="rc28"><rect x="0" y="423.8" width="22" height="10.4"/></clipPath>
<text x="11" y="431.3" text-anchor="middle" font-family="Liberation Sans" font-size="9" fill="#444" stroke="#444" stroke-width="0.15" clip-path="url(#rc28)">29</text>
<rect x="0" y="434.8" width="21.5" height="10.4" fill="url(#grh)"/>
<path d="M0 444.8H21.5" stroke="#ababab" stroke-width="0.9"/>
<clipPath id="rc29"><rect x="0" y="434.7" width="22" height="10.5"/></clipPath>
<text x="11" y="442.3" text-anchor="middle" font-family="Liberation Sans" font-size="9" fill="#444" stroke="#444" stroke-width="0.15" clip-path="url(#rc29)">30</text>
<rect x="0" y="445.8" width="21.5" height="10.2" fill="url(#grh)"/>
<path d="M0 455.6H21.5" stroke="#ababab" stroke-width="0.9"/>
<clipPath id="rc30"><rect x="0" y="445.7" width="22" height="10.3"/></clipPath>
<text x="11" y="453.1" text-anchor="middle" font-family="Liberation Sans" font-size="9" fill="#444" stroke="#444" stroke-width="0.15" clip-path="url(#rc30)">31</text>
<rect x="0" y="456.6" width="21.5" height="10.8" fill="url(#grh)"/>
<path d="M0 467.0H21.5" stroke="#ababab" stroke-width="0.9"/>
<clipPath id="rc31"><rect x="0" y="456.5" width="22" height="10.9"/></clipPath>
<text x="11" y="464.5" text-anchor="middle" font-family="Liberation Sans" font-size="9" fill="#444" stroke="#444" stroke-width="0.15" clip-path="url(#rc31)">32</text>
<rect x="0" y="468.0" width="21.5" height="9.4" fill="url(#grh)"/>
<path d="M0 477.0H21.5" stroke="#ababab" stroke-width="0.9"/>
<clipPath id="rc32"><rect x="0" y="467.9" width="22" height="9.5"/></clipPath>
<text x="11" y="474.5" text-anchor="middle" font-family="Liberation Sans" font-size="9" fill="#444" stroke="#444" stroke-width="0.15" clip-path="url(#rc32)">33</text>
<rect x="0" y="478.0" width="21.5" height="9.7" fill="url(#grh)"/>
<path d="M0 487.3H21.5" stroke="#ababab" stroke-width="0.9"/>
<clipPath id="rc33"><rect x="0" y="477.9" width="22" height="9.8"/></clipPath>
<text x="11" y="484.8" text-anchor="middle" font-family="Liberation Sans" font-size="9" fill="#444" stroke="#444" stroke-width="0.15" clip-path="url(#rc33)">34</text>
<rect x="0" y="488.3" width="21.5" height="9.6" fill="url(#grh)"/>
<path d="M0 497.5H21.5" stroke="#ababab" stroke-width="0.9"/>
<clipPath id="rc34"><rect x="0" y="488.2" width="22" height="9.7"/></clipPath>
<text x="11" y="495.0" text-anchor="middle" font-family="Liberation Sans" font-size="9" fill="#444" stroke="#444" stroke-width="0.15" clip-path="url(#rc34)">35</text>
<rect x="0" y="498.5" width="21.5" height="9.9" fill="url(#grh)"/>
<path d="M0 508.0H21.5" stroke="#ababab" stroke-width="0.9"/>
<clipPath id="rc35"><rect x="0" y="498.4" width="22" height="10.0"/></clipPath>
<text x="11" y="505.5" text-anchor="middle" font-family="Liberation Sans" font-size="9" fill="#444" stroke="#444" stroke-width="0.15" clip-path="url(#rc35)">36</text>
<rect x="0" y="509.0" width="21.5" height="9.3" fill="url(#grh)"/>
<path d="M0 517.9H21.5" stroke="#ababab" stroke-width="0.9"/>
<clipPath id="rc36"><rect x="0" y="508.9" width="22" height="9.4"/></clipPath>
<text x="11" y="515.4" text-anchor="middle" font-family="Liberation Sans" font-size="9" fill="#444" stroke="#444" stroke-width="0.15" clip-path="url(#rc36)">37</text>
<rect x="0" y="518.9" width="21.5" height="9.7" fill="url(#grh)"/>
<path d="M0 528.2H21.5" stroke="#ababab" stroke-width="0.9"/>
<clipPath id="rc37"><rect x="0" y="518.8" width="22" height="9.8"/></clipPath>
<text x="11" y="525.7" text-anchor="middle" font-family="Liberation Sans" font-size="9" fill="#444" stroke="#444" stroke-width="0.15" clip-path="url(#rc37)">38</text>
<rect x="0" y="529.2" width="21.5" height="9.8" fill="url(#grh)"/>
<path d="M0 538.6H21.5" stroke="#ababab" stroke-width="0.9"/>
<clipPath id="rc38"><rect x="0" y="529.1" width="22" height="9.9"/></clipPath>
<text x="11" y="536.1" text-anchor="middle" font-family="Liberation Sans" font-size="9" fill="#444" stroke="#444" stroke-width="0.15" clip-path="url(#rc38)">39</text>
<rect x="0" y="539.6" width="21.5" height="9.8" fill="url(#grh)"/>
<path d="M0 549.0H21.5" stroke="#ababab" stroke-width="0.9"/>
<clipPath id="rc39"><rect x="0" y="539.5" width="22" height="9.9"/></clipPath>
<text x="11" y="546.5" text-anchor="middle" font-family="Liberation Sans" font-size="9" fill="#444" stroke="#444" stroke-width="0.15" clip-path="url(#rc39)">40</text>
<rect x="0" y="550.0" width="21.5" height="10.0" fill="url(#grh)"/>
<path d="M0 559.6H21.5" stroke="#ababab" stroke-width="0.9"/>
<clipPath id="rc40"><rect x="0" y="549.9" width="22" height="10.1"/></clipPath>
<text x="11" y="557.1" text-anchor="middle" font-family="Liberation Sans" font-size="9" fill="#444" stroke="#444" stroke-width="0.15" clip-path="url(#rc40)">41</text>
<path d="M21.5 134V553" stroke="#9c9c9c" stroke-width="1"/>
</svg>
<div class="ch" style="left:22px;width:38.0px;">A</div>
<div class="ch" style="left:60px;width:39.5px;">B</div>
<div class="ch" style="left:99.5px;width:39.2px;">C</div>
<div class="ch" style="left:138.7px;width:38.8px;">D</div>
<div class="ch" style="left:177.5px;width:38.5px;">E</div>
<div class="ch" style="left:216px;width:55.0px;">F</div>
<div class="ch" style="left:271px;width:46.0px;">G</div>
<div class="ch" style="left:317px;width:43.0px;">H</div>
<div class="ch" style="left:360px;width:43.0px;">I</div>
<div class="ch" style="left:403px;width:43.5px;">J</div>
<div class="ch" style="left:446.5px;width:43.5px;">K</div>
<div class="ch" style="left:490px;width:38.0px;">L</div>
<div class="ch" style="left:528px;width:25.0px;">M</div>
<div class="ch" style="left:553px;width:39.0px;">N</div>
<div class="ch" style="left:592px;width:39.0px;">O</div>
<div class="ch" style="left:631px;width:139.0px;background:linear-gradient(#b4b4b4,#9a9a9a);color:#fff;">P</div>
<div class="ch" style="left:770px;width:39.0px;">Q</div>
<div class="ch" style="left:809px;width:21.0px;"></div>
<div class="a" style="left:0;top:124px;width:22px;height:10px;background:linear-gradient(#eee,#ddd);border-right:1px solid #bbb"></div>
<svg class="a" style="left:13px;top:126px" width="8" height="7"><path d="M8 0v7h-7z" fill="#fff"/></svg>

<!-- SHEET SVG -->
<svg id="sheetsvg" class="a" style="left:0;top:0" width="817" height="553" viewBox="0 0 817 553"><defs>
<linearGradient id="ggl" x1="0" y1="0" x2="0" y2="1"><stop offset="0" stop-color="#cfcfcf"/><stop offset="0.55" stop-color="#9a9a9a"/><stop offset="1" stop-color="#bdbdbd"/></linearGradient>
<linearGradient id="gcombo" x1="0" y1="0" x2="0" y2="1"><stop offset="0" stop-color="#ffffff"/><stop offset="1" stop-color="#e9e9e9"/></linearGradient>
<linearGradient id="gcall" x1="0" y1="0" x2="0" y2="1"><stop offset="0" stop-color="#dcf7fe"/><stop offset="1" stop-color="#b0eafa"/></linearGradient>
<linearGradient id="gmenu" x1="0" y1="0" x2="0" y2="1"><stop offset="0" stop-color="#66d0ea"/><stop offset="0.5" stop-color="#3bb5d6"/><stop offset="1" stop-color="#2c9fc0"/></linearGradient>
<pattern id="stripe" x="0" y="0" width="2" height="10" patternUnits="userSpaceOnUse"><rect x="0" y="0" width="2" height="10" fill="#d0e7ee"/><rect x="0" y="0" width="1" height="10" fill="#7ab6c8"/></pattern>
<filter id="sh" x="-10%" y="-20%" width="120%" height="160%"><feDropShadow dx="0" dy="0.8" stdDeviation="0.6" flood-color="#000" flood-opacity="0.3"/></filter>
</defs>
<rect x="22.0" y="134.0" width="531.0" height="17.5" fill="#2e869a" />
<rect x="22.0" y="151.0" width="531.0" height="1.2" fill="#257284" />
<rect x="22.0" y="152.2" width="531.0" height="2.6" fill="#a6d9e5" />
<text x="24.8" y="147.9" font-family="Liberation Sans" font-size="12.30" font-weight="normal" font-style="normal" fill="#fff" stroke="#fff" stroke-width="0.1" text-anchor="start" >Population Growth</text>
<rect x="429.5" y="137.7" width="117.3" height="13.7" rx="2.5" fill="url(#gcombo)" stroke="#7a9aa2" stroke-width="0.5"/>
<text x="435.4" y="148.0" font-family="Liberation Sans" font-size="8.29" font-weight="normal" font-style="normal" fill="#222" stroke="#222" stroke-width="0.1" text-anchor="start" textLength="25.5" lengthAdjust="spacingAndGlyphs" >Bahrain</text>
<path d="M539 143.3l1.8-2.3 1.8 2.3z" stroke="none" stroke-width="1" fill="#333" />
<path d="M539 146.3l1.8 2.3 1.8-2.3z" stroke="none" stroke-width="1" fill="#333" />
<text x="24.0" y="163.0" font-family="Liberation Sans" font-size="6.60" font-weight="normal" font-style="italic" fill="#666" stroke="#666" stroke-width="0.1" text-anchor="start" >Source: Undata</text>
<text x="69.5" y="159.5" font-family="Liberation Sans" font-size="4.20" font-weight="normal" font-style="italic" fill="#666" stroke="#666" stroke-width="0.1" text-anchor="start" >1</text>
<rect x="22.0" y="167.9" width="531.0" height="2.1" fill="url(#ggl)" />
<rect x="22.0" y="170.0" width="531.0" height="13.6" fill="#b7dfe6" />
<rect x="22.0" y="170.0" width="531.0" height="1.2" fill="#c4e6ee" />
<rect x="22.0" y="183.4" width="531.0" height="1.7" fill="#a4a4a4" />
<text x="24.0" y="179.1" font-family="Liberation Sans" font-size="7.15" font-weight="bold" font-style="normal" fill="#6e7f84" stroke="#6e7f84" stroke-width="0.0" text-anchor="start" >Total Population</text>
<text x="79.5" y="174.9" font-family="Liberation Sans" font-size="4.50" font-weight="bold" font-style="normal" fill="#6e7f84" stroke="#6e7f84" stroke-width="0.0" text-anchor="start" >2</text>
<text x="101.5" y="178.9" font-family="Liberation Sans" font-size="7.33" font-weight="bold" font-style="normal" fill="#6e7f84" stroke="#6e7f84" stroke-width="0.0" text-anchor="start" >724,788</text>
<text x="498.5" y="179.5" font-family="Liberation Sans" font-size="8.34" font-weight="normal" font-style="normal" fill="#6a7478" stroke="#6a7478" stroke-width="0.1" text-anchor="start" textLength="26.5" lengthAdjust="spacingAndGlyphs" >Position</text>
<text x="534.5" y="179.3" font-family="Liberation Sans" font-size="7.93" font-weight="normal" font-style="normal" fill="#6a7478" stroke="#6a7478" stroke-width="0.1" text-anchor="start" textLength="11.5" lengthAdjust="spacingAndGlyphs" >160</text>
<text x="32.2" y="199.3" font-family="Liberation Sans" font-size="9.05" font-weight="bold" font-style="normal" fill="#7f7f7f" stroke="#7f7f7f" stroke-width="0.0" text-anchor="start" >Population (Millions)</text>
<rect x="110.7" y="209.7" width="50.5" height="4.0" fill="#3590a6" />
<rect x="161.2" y="209.7" width="36.8" height="4.0" fill="#efc5c5" />
<rect x="109.3" y="214.6" width="51.9" height="4.0" fill="#3590a6" />
<rect x="161.2" y="214.6" width="38.3" height="4.0" fill="#efc5c5" />
<rect x="107.2" y="219.6" width="54.0" height="4.0" fill="#3590a6" />
<rect x="161.2" y="219.6" width="39.8" height="4.0" fill="#efc5c5" />
<rect x="105.0" y="224.5" width="56.2" height="4.0" fill="#3590a6" />
<rect x="161.2" y="224.5" width="41.1" height="4.0" fill="#efc5c5" />
<rect x="103.5" y="229.5" width="57.7" height="4.0" fill="#3590a6" />
<rect x="161.2" y="229.5" width="42.3" height="4.0" fill="#efc5c5" />
<rect x="101.2" y="234.4" width="60.0" height="4.0" fill="#3590a6" />
<rect x="161.2" y="234.4" width="43.5" height="4.0" fill="#efc5c5" />
<rect x="97.8" y="239.4" width="63.4" height="4.0" fill="#3590a6" />
<rect x="161.2" y="239.4" width="45.4" height="4.0" fill="#efc5c5" />
<rect x="96.6" y="244.3" width="64.6" height="4.0" fill="#3590a6" />
<rect x="161.2" y="244.3" width="46.3" height="4.0" fill="#efc5c5" />
<rect x="95.3" y="249.3" width="65.9" height="4.0" fill="#3590a6" />
<rect x="161.2" y="249.3" width="47.8" height="4.0" fill="#efc5c5" />
<rect x="93.2" y="254.2" width="68.0" height="4.0" fill="#3590a6" />
<rect x="161.2" y="254.2" width="49.4" height="4.0" fill="#efc5c5" />
<rect x="91.8" y="259.2" width="69.4" height="4.0" fill="#3590a6" />
<rect x="161.2" y="259.2" width="50.6" height="4.0" fill="#efc5c5" />
<rect x="90.5" y="264.1" width="70.7" height="4.0" fill="#3590a6" />
<rect x="161.2" y="264.1" width="51.8" height="4.0" fill="#efc5c5" />
<rect x="88.4" y="269.1" width="72.8" height="4.0" fill="#3590a6" />
<rect x="161.2" y="269.1" width="53.4" height="4.0" fill="#efc5c5" />
<rect x="86.7" y="274.0" width="74.5" height="4.0" fill="#3590a6" />
<rect x="161.2" y="274.0" width="54.8" height="4.0" fill="#efc5c5" />
<rect x="84.6" y="279.0" width="76.6" height="4.0" fill="#3590a6" />
<rect x="161.2" y="279.0" width="56.5" height="4.0" fill="#efc5c5" />
<rect x="81.0" y="283.9" width="80.2" height="4.0" fill="#3590a6" />
<rect x="161.2" y="283.9" width="58.4" height="4.0" fill="#efc5c5" />
<rect x="81.0" y="288.9" width="80.2" height="4.0" fill="#3590a6" />
<rect x="161.2" y="288.9" width="59.6" height="4.0" fill="#efc5c5" />
<rect x="77.8" y="293.8" width="83.4" height="4.0" fill="#3590a6" />
<rect x="161.2" y="293.8" width="61.0" height="4.0" fill="#efc5c5" />
<rect x="75.9" y="298.8" width="85.3" height="4.0" fill="#3590a6" />
<rect x="161.2" y="298.8" width="62.4" height="4.0" fill="#efc5c5" />
<rect x="73.8" y="303.7" width="87.4" height="4.0" fill="#3590a6" />
<rect x="161.2" y="303.7" width="64.3" height="4.0" fill="#efc5c5" />
<rect x="72.1" y="308.7" width="89.1" height="4.0" fill="#3590a6" />
<rect x="161.2" y="308.7" width="66.0" height="4.0" fill="#efc5c5" />
<path d="M161.2 209.7V313.6" stroke="#7a9aa2" stroke-width="0.6" fill="none" />
<text x="32.2" y="215.7" font-family="Liberation Sans" font-size="6.65" font-weight="normal" font-style="normal" fill="#111" stroke="#111" stroke-width="0.1" text-anchor="start" >1985</text>
<text x="32.2" y="225.6" font-family="Liberation Sans" font-size="6.65" font-weight="normal" font-style="normal" fill="#111" stroke="#111" stroke-width="0.1" text-anchor="start" >1987</text>
<text x="32.2" y="235.4" font-family="Liberation Sans" font-size="6.65" font-weight="normal" font-style="normal" fill="#111" stroke="#111" stroke-width="0.1" text-anchor="start" >1989</text>
<text x="32.2" y="245.3" font-family="Liberation Sans" font-size="6.65" font-weight="normal" font-style="normal" fill="#111" stroke="#111" stroke-width="0.1" text-anchor="start" >1991</text>
<text x="32.2" y="255.2" font-family="Liberation Sans" font-size="6.65" font-weight="normal" font-style="normal" fill="#111" stroke="#111" stroke-width="0.1" text-anchor="start" >1993</text>
<text x="32.2" y="265.0" font-family="Liberation Sans" font-size="6.65" font-weight="normal" font-style="normal" fill="#111" stroke="#111" stroke-width="0.1" text-anchor="start" >1995</text>
<text x="32.2" y="274.9" font-family="Liberation Sans" font-size="6.65" font-weight="normal" font-style="normal" fill="#111" stroke="#111" stroke-width="0.1" text-anchor="start" >1997</text>
<text x="32.2" y="284.8" font-family="Liberation Sans" font-size="6.65" font-weight="normal" font-style="normal" fill="#111" stroke="#111" stroke-width="0.1" text-anchor="start" >1999</text>
<text x="32.2" y="294.7" font-family="Liberation Sans" font-size="6.65" font-weight="normal" font-style="normal" fill="#111" stroke="#111" stroke-width="0.1" text-anchor="start" >2001</text>
<text x="32.2" y="304.5" font-family="Liberation Sans" font-size="6.65" font-weight="normal" font-style="normal" fill="#111" stroke="#111" stroke-width="0.1" text-anchor="start" >2003</text>
<text x="32.2" y="314.4" font-family="Liberation Sans" font-size="6.65" font-weight="normal" font-style="normal" fill="#111" stroke="#111" stroke-width="0.1" text-anchor="start" >2005</text>
<text x="50.7" y="215.8" font-family="Liberation Sans" font-size="7.00" font-weight="normal" font-style="normal" fill="#111" stroke="#111" stroke-width="0.1" text-anchor="start" >Male</text>
<text x="226.4" y="215.4" font-family="Liberation Sans" font-size="6.60" font-weight="normal" font-style="normal" fill="#111" stroke="#111" stroke-width="0.1" text-anchor="start" >Female</text>
<path d="M53.3 313.8H247.3" stroke="#9a9a9a" stroke-width="0.8" fill="none" />
<path d="M53.3 313.8v2" stroke="#9a9a9a" stroke-width="0.8" fill="none" />
<path d="M74.7 313.8v2" stroke="#9a9a9a" stroke-width="0.8" fill="none" />
<path d="M96.6 313.8v2" stroke="#9a9a9a" stroke-width="0.8" fill="none" />
<path d="M118 313.8v2" stroke="#9a9a9a" stroke-width="0.8" fill="none" />
<path d="M139.5 313.8v2" stroke="#9a9a9a" stroke-width="0.8" fill="none" />
<path d="M161.2 313.8v2" stroke="#9a9a9a" stroke-width="0.8" fill="none" />
<path d="M182.2 313.8v2" stroke="#9a9a9a" stroke-width="0.8" fill="none" />
<path d="M203.5 313.8v2" stroke="#9a9a9a" stroke-width="0.8" fill="none" />
<path d="M225.3 313.8v2" stroke="#9a9a9a" stroke-width="0.8" fill="none" />
<path d="M247.3 313.8v2" stroke="#9a9a9a" stroke-width="0.8" fill="none" />
<text x="53.3" y="326.0" font-family="Liberation Sans" font-size="7.00" font-weight="normal" font-style="normal" fill="#111" stroke="#111" stroke-width="0.1" text-anchor="middle" >1</text>
<text x="74.7" y="326.0" font-family="Liberation Sans" font-size="7.00" font-weight="normal" font-style="normal" fill="#111" stroke="#111" stroke-width="0.1" text-anchor="middle" >0</text>
<text x="96.6" y="326.0" font-family="Liberation Sans" font-size="7.00" font-weight="normal" font-style="normal" fill="#111" stroke="#111" stroke-width="0.1" text-anchor="middle" >0</text>
<text x="118.0" y="326.0" font-family="Liberation Sans" font-size="7.00" font-weight="normal" font-style="normal" fill="#111" stroke="#111" stroke-width="0.1" text-anchor="middle" >0</text>
<text x="139.5" y="326.0" font-family="Liberation Sans" font-size="7.00" font-weight="normal" font-style="normal" fill="#111" stroke="#111" stroke-width="0.1" text-anchor="middle" >0</text>
<text x="161.2" y="326.0" font-family="Liberation Sans" font-size="7.00" font-weight="normal" font-style="normal" fill="#111" stroke="#111" stroke-width="0.1" text-anchor="middle" >0</text>
<text x="182.2" y="326.0" font-family="Liberation Sans" font-size="7.00" font-weight="normal" font-style="normal" fill="#111" stroke="#111" stroke-width="0.1" text-anchor="middle" >0</text>
<text x="203.5" y="326.0" font-family="Liberation Sans" font-size="7.00" font-weight="normal" font-style="normal" fill="#111" stroke="#111" stroke-width="0.1" text-anchor="middle" >0</text>
<text x="225.3" y="326.0" font-family="Liberation Sans" font-size="7.00" font-weight="normal" font-style="normal" fill="#111" stroke="#111" stroke-width="0.1" text-anchor="middle" >0</text>
<text x="247.3" y="326.0" font-family="Liberation Sans" font-size="7.00" font-weight="normal" font-style="normal" fill="#111" stroke="#111" stroke-width="0.1" text-anchor="middle" >0</text>
<text x="277.4" y="201.2" font-family="Liberation Sans" font-size="9.00" font-weight="bold" font-style="normal" fill="#7f7f7f" stroke="#7f7f7f" stroke-width="0.0" text-anchor="start" >Population Growth</text>
<path d="M310.3 213.2V312.7H527.7" stroke="#a0a0a0" stroke-width="0.8" fill="none" />
<text x="303.5" y="216.3" font-family="Liberation Sans" font-size="6.60" font-weight="normal" font-style="normal" fill="#111" stroke="#111" stroke-width="0.1" text-anchor="end" >12.0%</text>
<path d="M308.3 213.9h2" stroke="#a0a0a0" stroke-width="0.8" fill="none" />
<text x="303.5" y="232.7" font-family="Liberation Sans" font-size="6.60" font-weight="normal" font-style="normal" fill="#111" stroke="#111" stroke-width="0.1" text-anchor="end" >10.0%</text>
<path d="M308.3 230.4h2" stroke="#a0a0a0" stroke-width="0.8" fill="none" />
<text x="303.5" y="249.2" font-family="Liberation Sans" font-size="6.60" font-weight="normal" font-style="normal" fill="#111" stroke="#111" stroke-width="0.1" text-anchor="end" >8.0%</text>
<path d="M308.3 246.8h2" stroke="#a0a0a0" stroke-width="0.8" fill="none" />
<text x="303.5" y="265.7" font-family="Liberation Sans" font-size="6.60" font-weight="normal" font-style="normal" fill="#111" stroke="#111" stroke-width="0.1" text-anchor="end" >6.0%</text>
<path d="M308.3 263.3h2" stroke="#a0a0a0" stroke-width="0.8" fill="none" />
<text x="303.5" y="282.1" font-family="Liberation Sans" font-size="6.60" font-weight="normal" font-style="normal" fill="#111" stroke="#111" stroke-width="0.1" text-anchor="end" >4.0%</text>
<path d="M308.3 279.8h2" stroke="#a0a0a0" stroke-width="0.8" fill="none" />
<text x="303.5" y="298.6" font-family="Liberation Sans" font-size="6.60" font-weight="normal" font-style="normal" fill="#111" stroke="#111" stroke-width="0.1" text-anchor="end" >2.0%</text>
<path d="M308.3 296.2h2" stroke="#a0a0a0" stroke-width="0.8" fill="none" />
<text x="303.5" y="315.1" font-family="Liberation Sans" font-size="6.60" font-weight="normal" font-style="normal" fill="#111" stroke="#111" stroke-width="0.1" text-anchor="end" >0.0%</text>
<path d="M308.3 312.7h2" stroke="#a0a0a0" stroke-width="0.8" fill="none" />
<path d="M353.8 312.7v2" stroke="#a0a0a0" stroke-width="0.8" fill="none" />
<path d="M397.2 312.7v2" stroke="#a0a0a0" stroke-width="0.8" fill="none" />
<path d="M440.6 312.7v2" stroke="#a0a0a0" stroke-width="0.8" fill="none" />
<path d="M484.1 312.7v2" stroke="#a0a0a0" stroke-width="0.8" fill="none" />
<path d="M527.7 312.7v2" stroke="#a0a0a0" stroke-width="0.8" fill="none" />
<text x="332.0" y="324.9" font-family="Liberation Sans" font-size="6.67" font-weight="normal" font-style="normal" fill="#111" stroke="#111" stroke-width="0.1" text-anchor="middle" >1985-1990</text>
<text x="375.5" y="324.9" font-family="Liberation Sans" font-size="6.67" font-weight="normal" font-style="normal" fill="#111" stroke="#111" stroke-width="0.1" text-anchor="middle" >1990-1995</text>
<text x="419.0" y="324.9" font-family="Liberation Sans" font-size="6.67" font-weight="normal" font-style="normal" fill="#111" stroke="#111" stroke-width="0.1" text-anchor="middle" >1995-2000</text>
<text x="462.5" y="324.9" font-family="Liberation Sans" font-size="6.67" font-weight="normal" font-style="normal" fill="#111" stroke="#111" stroke-width="0.1" text-anchor="middle" >2000-2005</text>
<text x="506.0" y="324.9" font-family="Liberation Sans" font-size="6.67" font-weight="normal" font-style="normal" fill="#111" stroke="#111" stroke-width="0.1" text-anchor="middle" >2005-2010</text>
<path d="M331.5 284.7L375.9 291.5L418.5 290.1L462.4 291L505.4 220.5" stroke="#3a94aa" stroke-width="1.8" fill="none" stroke-linejoin="round"/>
<text x="332.0" y="277.4" font-family="Liberation Sans" font-size="6.60" font-weight="normal" font-style="normal" fill="#111" stroke="#111" stroke-width="0.1" text-anchor="middle" >3.3%</text>
<text x="505.6" y="213.4" font-family="Liberation Sans" font-size="6.60" font-weight="normal" font-style="normal" fill="#111" stroke="#111" stroke-width="0.1" text-anchor="middle" >11.1%</text>
<rect x="271.3" y="331" width="256.4" height="40.6" fill="none" stroke="#9a9a9a" stroke-width="0.8"/>
<path d="M316.4 331V371.6" stroke="#9a9a9a" stroke-width="0.8" fill="none" />
<path d="M359.8 331V371.6" stroke="#9a9a9a" stroke-width="0.8" fill="none" />
<path d="M403.5 331V371.6" stroke="#9a9a9a" stroke-width="0.8" fill="none" />
<path d="M446.3 331V371.6" stroke="#9a9a9a" stroke-width="0.8" fill="none" />
<path d="M489.1 331V371.6" stroke="#9a9a9a" stroke-width="0.8" fill="none" />
<path d="M271.3 341.3H527.7" stroke="#111" stroke-width="1.3" fill="none" />
<path d="M271.3 351.6H527.7M271.3 361.5H527.7" stroke="#9a9a9a" stroke-width="0.8" fill="none" />
<text x="293.9" y="338.5" font-family="Liberation Sans" font-size="6.40" font-weight="normal" font-style="normal" fill="#111" stroke="#111" stroke-width="0.1" text-anchor="middle" >Global</text>
<text x="338.1" y="338.5" font-family="Liberation Sans" font-size="6.40" font-weight="normal" font-style="normal" fill="#111" stroke="#111" stroke-width="0.1" text-anchor="middle" >1985-1990</text>
<text x="381.7" y="338.5" font-family="Liberation Sans" font-size="6.40" font-weight="normal" font-style="normal" fill="#111" stroke="#111" stroke-width="0.1" text-anchor="middle" >1990-1995</text>
<text x="424.9" y="338.5" font-family="Liberation Sans" font-size="6.40" font-weight="normal" font-style="normal" fill="#111" stroke="#111" stroke-width="0.1" text-anchor="middle" >1995-2000</text>
<text x="467.7" y="338.5" font-family="Liberation Sans" font-size="6.40" font-weight="normal" font-style="normal" fill="#111" stroke="#111" stroke-width="0.1" text-anchor="middle" >2000-2005</text>
<text x="508.4" y="338.5" font-family="Liberation Sans" font-size="6.40" font-weight="normal" font-style="normal" fill="#111" stroke="#111" stroke-width="0.1" text-anchor="middle" >2005-2010</text>
<text x="293.9" y="348.7" font-family="Liberation Sans" font-size="6.40" font-weight="normal" font-style="normal" fill="#111" stroke="#111" stroke-width="0.1" text-anchor="middle" >High</text>
<text x="338.1" y="348.7" font-family="Liberation Sans" font-size="6.40" font-weight="normal" font-style="normal" fill="#111" stroke="#111" stroke-width="0.1" text-anchor="middle" >6.7%</text>
<text x="381.7" y="348.7" font-family="Liberation Sans" font-size="6.40" font-weight="normal" font-style="normal" fill="#111" stroke="#111" stroke-width="0.1" text-anchor="middle" >8.4%</text>
<text x="424.9" y="348.7" font-family="Liberation Sans" font-size="6.40" font-weight="normal" font-style="normal" fill="#111" stroke="#111" stroke-width="0.1" text-anchor="middle" >7.5%</text>
<text x="467.7" y="348.7" font-family="Liberation Sans" font-size="6.40" font-weight="normal" font-style="normal" fill="#111" stroke="#111" stroke-width="0.1" text-anchor="middle" >6.6%</text>
<text x="508.4" y="348.7" font-family="Liberation Sans" font-size="6.40" font-weight="normal" font-style="normal" fill="#111" stroke="#111" stroke-width="0.1" text-anchor="middle" >15.2%</text>
<text x="293.9" y="358.8" font-family="Liberation Sans" font-size="6.40" font-weight="normal" font-style="normal" fill="#111" stroke="#111" stroke-width="0.1" text-anchor="middle" >Average</text>
<text x="338.1" y="358.8" font-family="Liberation Sans" font-size="6.40" font-weight="normal" font-style="normal" fill="#111" stroke="#111" stroke-width="0.1" text-anchor="middle" >1.9%</text>
<text x="381.7" y="358.8" font-family="Liberation Sans" font-size="6.40" font-weight="normal" font-style="normal" fill="#111" stroke="#111" stroke-width="0.1" text-anchor="middle" >1.6%</text>
<text x="424.9" y="358.8" font-family="Liberation Sans" font-size="6.40" font-weight="normal" font-style="normal" fill="#111" stroke="#111" stroke-width="0.1" text-anchor="middle" >1.5%</text>
<text x="467.7" y="358.8" font-family="Liberation Sans" font-size="6.40" font-weight="normal" font-style="normal" fill="#111" stroke="#111" stroke-width="0.1" text-anchor="middle" >1.4%</text>
<text x="508.4" y="358.8" font-family="Liberation Sans" font-size="6.40" font-weight="normal" font-style="normal" fill="#111" stroke="#111" stroke-width="0.1" text-anchor="middle" >1.5%</text>
<text x="293.9" y="368.8" font-family="Liberation Sans" font-size="6.40" font-weight="normal" font-style="normal" fill="#111" stroke="#111" stroke-width="0.1" text-anchor="middle" >Low</text>
<text x="338.1" y="368.8" font-family="Liberation Sans" font-size="6.40" font-weight="normal" font-style="normal" fill="#111" stroke="#111" stroke-width="0.1" text-anchor="middle" >-0.8%</text>
<text x="381.7" y="368.8" font-family="Liberation Sans" font-size="6.40" font-weight="normal" font-style="normal" fill="#111" stroke="#111" stroke-width="0.1" text-anchor="middle" >-5.1%</text>
<text x="424.9" y="368.8" font-family="Liberation Sans" font-size="6.40" font-weight="normal" font-style="normal" fill="#111" stroke="#111" stroke-width="0.1" text-anchor="middle" >-1.3%</text>
<text x="467.7" y="368.8" font-family="Liberation Sans" font-size="6.40" font-weight="normal" font-style="normal" fill="#111" stroke="#111" stroke-width="0.1" text-anchor="middle" >-1.7%</text>
<text x="508.4" y="368.8" font-family="Liberation Sans" font-size="6.40" font-weight="normal" font-style="normal" fill="#111" stroke="#111" stroke-width="0.1" text-anchor="middle" >-1.1%</text>
<text x="33.3" y="348.7" font-family="Liberation Sans" font-size="8.70" font-weight="bold" font-style="normal" fill="#7f7f7f" stroke="#7f7f7f" stroke-width="0.0" text-anchor="start" >Age-specific Fertility</text>
<text x="30.9" y="358.8" font-family="Liberation Sans" font-size="7.00" font-weight="normal" font-style="italic" fill="#7f7f7f" stroke="#7f7f7f" stroke-width="0.1" text-anchor="start" >Births per 1000 women</text>
<path d="M47.4 370V451.2H254.3" stroke="#a0a0a0" stroke-width="0.8" fill="none" />
<text x="41.5" y="372.4" font-family="Liberation Sans" font-size="6.60" font-weight="normal" font-style="normal" fill="#111" stroke="#111" stroke-width="0.1" text-anchor="end" >140</text>
<path d="M45.4 370.0h2" stroke="#a0a0a0" stroke-width="0.8" fill="none" />
<text x="41.5" y="384.0" font-family="Liberation Sans" font-size="6.60" font-weight="normal" font-style="normal" fill="#111" stroke="#111" stroke-width="0.1" text-anchor="end" >120</text>
<path d="M45.4 381.6h2" stroke="#a0a0a0" stroke-width="0.8" fill="none" />
<text x="41.5" y="395.6" font-family="Liberation Sans" font-size="6.60" font-weight="normal" font-style="normal" fill="#111" stroke="#111" stroke-width="0.1" text-anchor="end" >100</text>
<path d="M45.4 393.2h2" stroke="#a0a0a0" stroke-width="0.8" fill="none" />
<text x="41.5" y="407.2" font-family="Liberation Sans" font-size="6.60" font-weight="normal" font-style="normal" fill="#111" stroke="#111" stroke-width="0.1" text-anchor="end" >80</text>
<path d="M45.4 404.8h2" stroke="#a0a0a0" stroke-width="0.8" fill="none" />
<text x="41.5" y="418.8" font-family="Liberation Sans" font-size="6.60" font-weight="normal" font-style="normal" fill="#111" stroke="#111" stroke-width="0.1" text-anchor="end" >60</text>
<path d="M45.4 416.4h2" stroke="#a0a0a0" stroke-width="0.8" fill="none" />
<text x="41.5" y="430.4" font-family="Liberation Sans" font-size="6.60" font-weight="normal" font-style="normal" fill="#111" stroke="#111" stroke-width="0.1" text-anchor="end" >40</text>
<path d="M45.4 428.0h2" stroke="#a0a0a0" stroke-width="0.8" fill="none" />
<text x="41.5" y="442.0" font-family="Liberation Sans" font-size="6.60" font-weight="normal" font-style="normal" fill="#111" stroke="#111" stroke-width="0.1" text-anchor="end" >20</text>
<path d="M45.4 439.6h2" stroke="#a0a0a0" stroke-width="0.8" fill="none" />
<text x="41.5" y="453.6" font-family="Liberation Sans" font-size="6.60" font-weight="normal" font-style="normal" fill="#111" stroke="#111" stroke-width="0.1" text-anchor="end" >0</text>
<path d="M45.4 451.2h2" stroke="#a0a0a0" stroke-width="0.8" fill="none" />
<path d="M47.9 450.8 L47.9 439.7 L77 439.7 L77 392.2 L107 392.2 L107 384 L136.6 384 L136.6 380.3 L165.6 380.3 L165.6 395.6 L195 395.6 L195 425.9 L224.4 425.9 L224.4 444.8 L254.3 444.8 L254.3 450.8 Z" stroke="none" stroke-width="1" fill="#3a94aa" />
<path d="M47.9 451.2v2" stroke="#a0a0a0" stroke-width="0.8" fill="none" />
<path d="M77 451.2v2" stroke="#a0a0a0" stroke-width="0.8" fill="none" />
<path d="M107 451.2v2" stroke="#a0a0a0" stroke-width="0.8" fill="none" />
<path d="M136.6 451.2v2" stroke="#a0a0a0" stroke-width="0.8" fill="none" />
<path d="M165.6 451.2v2" stroke="#a0a0a0" stroke-width="0.8" fill="none" />
<path d="M195 451.2v2" stroke="#a0a0a0" stroke-width="0.8" fill="none" />
<path d="M224.4 451.2v2" stroke="#a0a0a0" stroke-width="0.8" fill="none" />
<path d="M254.3 451.2v2" stroke="#a0a0a0" stroke-width="0.8" fill="none" />
<text x="62.5" y="463.7" font-family="Liberation Sans" font-size="6.30" font-weight="normal" font-style="normal" fill="#111" stroke="#111" stroke-width="0.1" text-anchor="middle" >15-19 yr</text>
<text x="92.0" y="463.7" font-family="Liberation Sans" font-size="6.30" font-weight="normal" font-style="normal" fill="#111" stroke="#111" stroke-width="0.1" text-anchor="middle" >20-24 yr</text>
<text x="121.5" y="463.7" font-family="Liberation Sans" font-size="6.30" font-weight="normal" font-style="normal" fill="#111" stroke="#111" stroke-width="0.1" text-anchor="middle" >25-29 yr</text>
<text x="151.0" y="463.7" font-family="Liberation Sans" font-size="6.30" font-weight="normal" font-style="normal" fill="#111" stroke="#111" stroke-width="0.1" text-anchor="middle" >30-34 yr</text>
<text x="180.5" y="463.7" font-family="Liberation Sans" font-size="6.30" font-weight="normal" font-style="normal" fill="#111" stroke="#111" stroke-width="0.1" text-anchor="middle" >35-39 yr</text>
<text x="210.0" y="463.7" font-family="Liberation Sans" font-size="6.30" font-weight="normal" font-style="normal" fill="#111" stroke="#111" stroke-width="0.1" text-anchor="middle" >40-44 yr</text>
<text x="239.5" y="463.7" font-family="Liberation Sans" font-size="6.30" font-weight="normal" font-style="normal" fill="#111" stroke="#111" stroke-width="0.1" text-anchor="middle" >45-49 yr</text>
<text x="273.8" y="392.0" font-family="Liberation Sans" font-size="9.00" font-weight="bold" font-style="normal" fill="#7f7f7f" stroke="#7f7f7f" stroke-width="0.0" text-anchor="start" >Fertility Rate per Woman</text>
<text x="266.4" y="403.3" font-family="Liberation Sans" font-size="6.95" font-weight="normal" font-style="italic" fill="#7f7f7f" stroke="#7f7f7f" stroke-width="0.1" text-anchor="start" >Births per 1000 women</text>
<text x="273.2" y="409.6" font-family="Liberation Sans" font-size="7.20" font-weight="normal" font-style="normal" fill="#111" stroke="#111" stroke-width="0.1" text-anchor="start" >Period</text>
<text x="331.4" y="409.6" font-family="Liberation Sans" font-size="7.20" font-weight="normal" font-style="normal" fill="#111" stroke="#111" stroke-width="0.1" text-anchor="start" >Births per woman</text>
<text x="528.0" y="409.5" font-family="Liberation Sans" font-size="7.60" font-weight="normal" font-style="normal" fill="#111" stroke="#111" stroke-width="0.1" text-anchor="end" >F/M Ratio*</text>
<path d="M271 412.2H528" stroke="#222" stroke-width="0.9" fill="none" />
<text x="273.2" y="420.6" font-family="Liberation Sans" font-size="7.20" font-weight="normal" font-style="normal" fill="#111" stroke="#111" stroke-width="0.1" text-anchor="start" >1985-1990</text>
<text x="331.4" y="420.6" font-family="Liberation Sans" font-size="7.20" font-weight="normal" font-style="normal" fill="#111" stroke="#111" stroke-width="0.1" text-anchor="start" >4.08</text>
<text x="523.5" y="420.6" font-family="Liberation Sans" font-size="7.20" font-weight="normal" font-style="normal" fill="#111" stroke="#111" stroke-width="0.1" text-anchor="end" >95.2</text>
<rect x="362.0" y="414.0" width="79.0" height="7.0" fill="url(#stripe)" />
<text x="273.2" y="431.5" font-family="Liberation Sans" font-size="7.20" font-weight="normal" font-style="normal" fill="#111" stroke="#111" stroke-width="0.1" text-anchor="start" >1990-1995</text>
<text x="331.4" y="431.5" font-family="Liberation Sans" font-size="7.20" font-weight="normal" font-style="normal" fill="#111" stroke="#111" stroke-width="0.1" text-anchor="start" >3.35</text>
<text x="523.5" y="431.5" font-family="Liberation Sans" font-size="7.20" font-weight="normal" font-style="normal" fill="#111" stroke="#111" stroke-width="0.1" text-anchor="end" >95.4</text>
<rect x="362.0" y="425.0" width="65.0" height="7.0" fill="url(#stripe)" />
<text x="273.2" y="442.5" font-family="Liberation Sans" font-size="7.20" font-weight="normal" font-style="normal" fill="#111" stroke="#111" stroke-width="0.1" text-anchor="start" >1995-2000</text>
<text x="331.4" y="442.5" font-family="Liberation Sans" font-size="7.20" font-weight="normal" font-style="normal" fill="#111" stroke="#111" stroke-width="0.1" text-anchor="start" >2.89</text>
<text x="523.5" y="442.5" font-family="Liberation Sans" font-size="7.20" font-weight="normal" font-style="normal" fill="#111" stroke="#111" stroke-width="0.1" text-anchor="end" >94.4</text>
<rect x="362.0" y="436.0" width="55.0" height="7.0" fill="url(#stripe)" />
<text x="273.2" y="453.4" font-family="Liberation Sans" font-size="7.20" font-weight="normal" font-style="normal" fill="#111" stroke="#111" stroke-width="0.1" text-anchor="start" >2000-2005</text>
<text x="331.4" y="453.4" font-family="Liberation Sans" font-size="7.20" font-weight="normal" font-style="normal" fill="#111" stroke="#111" stroke-width="0.1" text-anchor="start" >2.62</text>
<text x="523.5" y="453.4" font-family="Liberation Sans" font-size="7.20" font-weight="normal" font-style="normal" fill="#111" stroke="#111" stroke-width="0.1" text-anchor="end" >96.3</text>
<rect x="362.0" y="447.0" width="51.0" height="7.0" fill="url(#stripe)" />
<text x="273.2" y="464.4" font-family="Liberation Sans" font-size="7.20" font-weight="normal" font-style="normal" fill="#111" stroke="#111" stroke-width="0.1" text-anchor="start" >2005-2010</text>
<text x="331.4" y="464.4" font-family="Liberation Sans" font-size="7.20" font-weight="normal" font-style="normal" fill="#111" stroke="#111" stroke-width="0.1" text-anchor="start" >2.63</text>
<text x="523.5" y="464.4" font-family="Liberation Sans" font-size="7.20" font-weight="normal" font-style="normal" fill="#111" stroke="#111" stroke-width="0.1" text-anchor="end" >95.7</text>
<rect x="362.0" y="458.0" width="51.0" height="7.0" fill="url(#stripe)" />
<text x="274.3" y="474.6" font-family="Liberation Sans" font-size="7.15" font-weight="normal" font-style="italic" fill="#333" stroke="#333" stroke-width="0.1" text-anchor="start" >*Females born per 100 males</text>
<text x="39.0" y="485.1" font-family="Liberation Sans" font-size="8.60" font-weight="bold" font-style="normal" fill="#7f7f7f" stroke="#7f7f7f" stroke-width="0.0" text-anchor="start" >Life Expectancy</text>
<circle cx="109.8" cy="482" r="1.9" fill="#3a94aa"/>
<text x="37.3" y="492.8" font-family="Liberation Sans" font-size="7.05" font-weight="normal" font-style="italic" fill="#7f7f7f" stroke="#7f7f7f" stroke-width="0.1" text-anchor="start" >Compared to rest of world</text>
<circle cx="123.5" cy="490" r="1.9" fill="#a0a0a0"/>
<path d="M53.3 498.8V553" stroke="#9a9a9a" stroke-width="0.8" fill="none" />
<path d="M53.3 498.8H225" stroke="#c8c8c8" stroke-width="0.8" fill="none" stroke-dasharray="3 1.5 1 1.5"/>
<path d="M51 498.8h2.3" stroke="#9a9a9a" stroke-width="0.8" fill="none" />
<path d="M53.3 524H225" stroke="#c8c8c8" stroke-width="0.8" fill="none" stroke-dasharray="3 1.5 1 1.5"/>
<path d="M51 524h2.3" stroke="#9a9a9a" stroke-width="0.8" fill="none" />
<path d="M53.3 549.7H225" stroke="#c8c8c8" stroke-width="0.8" fill="none" stroke-dasharray="3 1.5 1 1.5"/>
<path d="M51 549.7h2.3" stroke="#9a9a9a" stroke-width="0.8" fill="none" />
<path d="M88 498.8V553" stroke="#c8c8c8" stroke-width="0.8" fill="none" stroke-dasharray="3 1.5 1 1.5"/>
<path d="M122.7 498.8V553" stroke="#c8c8c8" stroke-width="0.8" fill="none" stroke-dasharray="3 1.5 1 1.5"/>
<path d="M156.6 498.8V553" stroke="#c8c8c8" stroke-width="0.8" fill="none" stroke-dasharray="3 1.5 1 1.5"/>
<path d="M190.8 498.8V553" stroke="#c8c8c8" stroke-width="0.8" fill="none" stroke-dasharray="3 1.5 1 1.5"/>
<path d="M225 498.8V553" stroke="#c8c8c8" stroke-width="0.8" fill="none" stroke-dasharray="3 1.5 1 1.5"/>
<text x="48.0" y="502.1" font-family="Liberation Sans" font-size="7.00" font-weight="normal" font-style="normal" fill="#111" stroke="#111" stroke-width="0.1" text-anchor="end" >100</text>
<text x="48.0" y="526.5" font-family="Liberation Sans" font-size="7.00" font-weight="normal" font-style="normal" fill="#111" stroke="#111" stroke-width="0.1" text-anchor="end" >80</text>
<text x="48.0" y="552.2" font-family="Liberation Sans" font-size="7.00" font-weight="normal" font-style="normal" fill="#111" stroke="#111" stroke-width="0.1" text-anchor="end" >60</text>
<text x="62.3" y="508.4" font-family="Liberation Sans" font-size="6.60" font-weight="bold" font-style="normal" fill="#111" stroke="#111" stroke-width="0.0" text-anchor="start" >Male</text>
<circle cx="156.0" cy="551.0" r="4.2" fill="#c6c6c6"/>
<circle cx="157.7" cy="550.0" r="4.2" fill="#c6c6c6"/>
<circle cx="159.4" cy="549.1" r="4.2" fill="#c6c6c6"/>
<circle cx="161.0" cy="548.1" r="4.2" fill="#c6c6c6"/>
<circle cx="162.7" cy="547.2" r="4.2" fill="#c6c6c6"/>
<circle cx="164.4" cy="546.2" r="4.2" fill="#c6c6c6"/>
<circle cx="166.1" cy="545.2" r="4.2" fill="#c6c6c6"/>
<circle cx="167.8" cy="544.3" r="4.2" fill="#c6c6c6"/>
<circle cx="169.4" cy="543.3" r="4.2" fill="#c6c6c6"/>
<circle cx="171.1" cy="542.4" r="4.2" fill="#c6c6c6"/>
<circle cx="172.8" cy="541.4" r="4.2" fill="#c6c6c6"/>
<circle cx="174.5" cy="540.4" r="4.2" fill="#c6c6c6"/>
<circle cx="176.2" cy="539.5" r="4.2" fill="#c6c6c6"/>
<circle cx="177.8" cy="538.5" r="4.2" fill="#c6c6c6"/>
<circle cx="179.5" cy="537.6" r="4.2" fill="#c6c6c6"/>
<circle cx="181.2" cy="536.6" r="4.2" fill="#c6c6c6"/>
<circle cx="182.9" cy="535.6" r="4.2" fill="#c6c6c6"/>
<circle cx="184.6" cy="534.7" r="4.2" fill="#c6c6c6"/>
<circle cx="186.2" cy="533.7" r="4.2" fill="#c6c6c6"/>
<circle cx="187.9" cy="532.8" r="4.2" fill="#c6c6c6"/>
<circle cx="189.6" cy="531.8" r="3.6" fill="#c6c6c6"/>
<circle cx="191.3" cy="530.8" r="3.6" fill="#c6c6c6"/>
<circle cx="193.0" cy="529.9" r="3.6" fill="#c6c6c6"/>
<circle cx="194.6" cy="528.9" r="3.6" fill="#c6c6c6"/>
<circle cx="196.3" cy="528.0" r="3.6" fill="#c6c6c6"/>
<circle cx="198.0" cy="527.0" r="3.6" fill="#c6c6c6"/>
<circle cx="161" cy="547" r="3.2" fill="#c6c6c6"/>
<circle cx="170" cy="545" r="3.5" fill="#c6c6c6"/>
<circle cx="176" cy="545" r="3" fill="#c6c6c6"/>
<circle cx="168" cy="540" r="3" fill="#c6c6c6"/>
<circle cx="181" cy="536" r="3.5" fill="#c6c6c6"/>
<circle cx="183" cy="531" r="2.8" fill="#c6c6c6"/>
<circle cx="188" cy="537" r="3" fill="#c6c6c6"/>
<circle cx="200" cy="526" r="3" fill="#c6c6c6"/>
<circle cx="152" cy="553" r="2.5" fill="#c6c6c6"/>
<circle cx="174" cy="552" r="3" fill="#c6c6c6"/>
<circle cx="172" cy="548" r="4" fill="#c6c6c6"/>
<circle cx="180" cy="543" r="4.2" fill="#c6c6c6"/>
<circle cx="190" cy="537" r="3.8" fill="#c6c6c6"/>
<circle cx="165" cy="550" r="4" fill="#c6c6c6"/>
<circle cx="196" cy="531" r="3.5" fill="#c6c6c6"/>
<circle cx="175" cy="548" r="4" fill="#c6c6c6"/>
<circle cx="184" cy="542" r="4" fill="#c6c6c6"/>
<circle cx="163" cy="553" r="4" fill="#c6c6c6"/>
<circle cx="192" cy="536" r="3.5" fill="#c6c6c6"/>
<circle cx="180" cy="549" r="3.5" fill="#c6c6c6"/>
<circle cx="185.7" cy="532.3" r="2.6" fill="#3a94aa"/>
<text x="265.5" y="496.4" font-family="Liberation Sans" font-size="8.72" font-weight="bold" font-style="normal" fill="#7f7f7f" stroke="#7f7f7f" stroke-width="0.0" text-anchor="start" >Population Density per km</text>
<text x="376.8" y="492.9" font-family="Liberation Sans" font-size="5.20" font-weight="bold" font-style="normal" fill="#7f7f7f" stroke="#7f7f7f" stroke-width="0.0" text-anchor="start" >2</text>
<path d="M291 509.6V553" stroke="#a0a0a0" stroke-width="0.8" fill="none" />
<text x="284.6" y="513.7" font-family="Liberation Sans" font-size="6.40" font-weight="normal" font-style="normal" fill="#111" stroke="#111" stroke-width="0.1" text-anchor="end" >1200.0</text>
<path d="M289 511.4h2" stroke="#a0a0a0" stroke-width="0.8" fill="none" />
<text x="284.6" y="527.6" font-family="Liberation Sans" font-size="6.40" font-weight="normal" font-style="normal" fill="#111" stroke="#111" stroke-width="0.1" text-anchor="end" >1000.0</text>
<path d="M289 525.3h2" stroke="#a0a0a0" stroke-width="0.8" fill="none" />
<text x="284.6" y="543.3" font-family="Liberation Sans" font-size="6.40" font-weight="normal" font-style="normal" fill="#111" stroke="#111" stroke-width="0.1" text-anchor="end" >800.0</text>
<path d="M289 541h2" stroke="#a0a0a0" stroke-width="0.8" fill="none" />
<rect x="345.0" y="547.0" width="34.5" height="6.0" fill="#3a94aa" />
<rect x="392.0" y="540.3" width="34.6" height="12.7" fill="#3a94aa" />
<rect x="438.8" y="531.6" width="34.9" height="21.4" fill="#3a94aa" />
<rect x="486.0" y="521.9" width="34.0" height="31.1" fill="#3a94aa" />
<path d="M152 193V182.8H429H429V196.2H584" stroke="#4a7fc0" stroke-width="0.9" fill="none" />
<path d="M22 182.6H553" stroke="#9bbbd8" stroke-width="1.0" fill="none" />
<path d="M148.6 189.6l3.4 3.6 3.4-3.6" stroke="#4a7fc0" stroke-width="1.0" fill="none" />
<path d="M553.5 147.6H584" stroke="#4a7fc0" stroke-width="0.9" fill="none" />
<path d="M557.8 144l-4 3.6 4 3.6" stroke="#4a7fc0" stroke-width="1.0" fill="none" />
<path d="M553.5 176.3H584" stroke="#4a7fc0" stroke-width="0.9" fill="none" />
<path d="M557.8 172.7l-4 3.6 4 3.6" stroke="#4a7fc0" stroke-width="1.0" fill="none" />
<path d="M551.5 246.2H584" stroke="#4a7fc0" stroke-width="0.9" fill="none" />
<path d="M555.8 242.6l-4 3.6 4 3.6" stroke="#4a7fc0" stroke-width="1.0" fill="none" />
<path d="M551 353.2H584" stroke="#4a7fc0" stroke-width="0.9" fill="none" />
<path d="M555.3 349.6l-4 3.6 4 3.6" stroke="#4a7fc0" stroke-width="1.0" fill="none" />
<path d="M551 428.2H584" stroke="#4a7fc0" stroke-width="0.9" fill="none" />
<path d="M555.3 424.6l-4 3.6 4 3.6" stroke="#4a7fc0" stroke-width="1.0" fill="none" />
<path d="M151.5 471.2H367.7V481.8H584" stroke="#4a7fc0" stroke-width="0.9" fill="none" />
<path d="M155.8 467.6l-4 3.6 4 3.6" stroke="#4a7fc0" stroke-width="1.0" fill="none" />
<rect x="584.5" y="140" width="123" height="15.3" rx="1.5" fill="url(#gcall)" stroke="#72c2da" stroke-width="1.1" filter="url(#sh)"/>
<text x="589.5" y="151.5" font-family="Liberation Sans" font-size="8.38" font-weight="normal" font-style="normal" fill="#111" stroke="#111" stroke-width="0.1" text-anchor="start" textLength="83.7" lengthAdjust="spacingAndGlyphs" >Combo box - Session 5.08</text>
<rect x="584.5" y="168.5" width="123" height="15.5" rx="1.5" fill="url(#gcall)" stroke="#72c2da" stroke-width="1.1" filter="url(#sh)"/>
<text x="589.5" y="180.1" font-family="Liberation Sans" font-size="8.38" font-weight="normal" font-style="normal" fill="#111" stroke="#111" stroke-width="0.1" text-anchor="start" textLength="59.8" lengthAdjust="spacingAndGlyphs" >VLOOKUP formula</text>
<rect x="584.5" y="187.7" width="123" height="15.3" rx="1.5" fill="url(#gcall)" stroke="#72c2da" stroke-width="1.1" filter="url(#sh)"/>
<text x="589.5" y="199.2" font-family="Liberation Sans" font-size="8.38" font-weight="normal" font-style="normal" fill="#111" stroke="#111" stroke-width="0.1" text-anchor="start" textLength="94.7" lengthAdjust="spacingAndGlyphs" >Pyramid Chart - Session&#160; 8.03</text>
<rect x="584.5" y="238.2" width="123" height="15.3" rx="1.5" fill="url(#gcall)" stroke="#72c2da" stroke-width="1.1" filter="url(#sh)"/>
<text x="589.5" y="249.7" font-family="Liberation Sans" font-size="8.38" font-weight="normal" font-style="normal" fill="#111" stroke="#111" stroke-width="0.1" text-anchor="start" textLength="80.1" lengthAdjust="spacingAndGlyphs" >Line Chart - Session 4.01</text>
<rect x="584.5" y="339.8" width="123" height="27.4" rx="1.5" fill="url(#gcall)" stroke="#72c2da" stroke-width="1.1" filter="url(#sh)"/>
<text x="589.5" y="352.4" font-family="Liberation Sans" font-size="8.38" font-weight="normal" font-style="normal" fill="#111" stroke="#111" stroke-width="0.1" text-anchor="start" textLength="109.1" lengthAdjust="spacingAndGlyphs" >Linked cells. Copy &gt; Paste Special</text>
<text x="589.5" y="362.2" font-family="Liberation Sans" font-size="8.38" font-weight="normal" font-style="normal" fill="#111" stroke="#111" stroke-width="0.1" text-anchor="start" textLength="22.7" lengthAdjust="spacingAndGlyphs" >&gt; Links</text>
<rect x="584.5" y="420.8" width="123" height="14.9" rx="1.5" fill="url(#gcall)" stroke="#72c2da" stroke-width="1.1" filter="url(#sh)"/>
<text x="589.5" y="432.1" font-family="Liberation Sans" font-size="8.38" font-weight="normal" font-style="normal" fill="#111" stroke="#111" stroke-width="0.1" text-anchor="start" textLength="87.6" lengthAdjust="spacingAndGlyphs" >In-cell charts - Session 4.01</text>
<rect x="584.5" y="474.3" width="123" height="14.9" rx="1.5" fill="url(#gcall)" stroke="#72c2da" stroke-width="1.1" filter="url(#sh)"/>
<text x="589.5" y="485.6" font-family="Liberation Sans" font-size="8.38" font-weight="normal" font-style="normal" fill="#111" stroke="#111" stroke-width="0.1" text-anchor="start" textLength="79.7" lengthAdjust="spacingAndGlyphs" >Histogram - Session 4.08</text>
<rect x="584.5" y="549" width="123" height="21.0" rx="1.5" fill="url(#gcall)" stroke="#72c2da" stroke-width="1.1" filter="url(#sh)"/>
<text x="589.5" y="563.4" font-family="Liberation Sans" font-size="8.38" font-weight="normal" font-style="normal" fill="#111" stroke="#111" stroke-width="0.1" text-anchor="start" textLength="0.0" lengthAdjust="spacingAndGlyphs" ></text>
<rect x="717.5" y="136.5" width="62" height="20" rx="3.5" fill="url(#gmenu)" stroke="#2a8aa6" stroke-width="0.8" filter="url(#sh)"/>
<text x="748.5" y="150.1" font-family="Liberation Sans" font-size="7.80" font-weight="bold" font-style="normal" fill="#fff" stroke="#fff" stroke-width="0.0" text-anchor="middle" >Menu</text>
<rect x="631" y="280" width="138.5" height="9.3" fill="none" stroke="#2f5fd0" stroke-width="1.6"/>
<rect x="767.3" y="287.3" width="3.6" height="3.6" fill="#fff" stroke="#2f5fd0" stroke-width="0.9"/>
</svg>
<!-- ===== BOTTOM ===== -->
<svg class="a" style="left:0;top:553px" width="817" height="18" viewBox="0 553 817 18">
<defs>
<linearGradient id="gtb" x1="0" y1="0" x2="0" y2="1"><stop offset="0" stop-color="#d6d6d6"/><stop offset="1" stop-color="#c4c4c4"/></linearGradient>
<linearGradient id="gtw" x1="0" y1="0" x2="0" y2="1"><stop offset="0" stop-color="#ffffff"/><stop offset="1" stop-color="#ececec"/></linearGradient>
<linearGradient id="gtg" x1="0" y1="0" x2="0" y2="1"><stop offset="0" stop-color="#e6e6e6"/><stop offset="1" stop-color="#cfcfcf"/></linearGradient>
<linearGradient id="gtl" x1="0" y1="0" x2="0" y2="1"><stop offset="0" stop-color="#c5e7f0"/><stop offset="1" stop-color="#a6d6e3"/></linearGradient>
<linearGradient id="gtd" x1="0" y1="0" x2="0" y2="1"><stop offset="0" stop-color="#4d8d9c"/><stop offset="1" stop-color="#3a7787"/></linearGradient>
<linearGradient id="gvb" x1="0" y1="0" x2="0" y2="1"><stop offset="0" stop-color="#6a6a6a"/><stop offset="1" stop-color="#4a4a4a"/></linearGradient>
<linearGradient id="gnav" x1="0" y1="0" x2="0" y2="1"><stop offset="0" stop-color="#f0f0f0"/><stop offset="1" stop-color="#d2d2d2"/></linearGradient>
</defs>
<rect x="0" y="553" width="817" height="18" fill="url(#gtb)"/>
<path d="M0 553.5H817" stroke="#8f8f8f" stroke-width="1"/>
<!-- status bar -->
<rect x="48" y="564.5" width="769" height="7" fill="#f2f2f2"/>
<path d="M48 564.5H817" stroke="#a8a8a8" stroke-width="0.8"/>
<path d="M116.5 564.5v7M393 564.5v7M510 564.5v7M610.6 564.5v7M636 564.5v7M661 564.5v7M682 564.5v7" stroke="#b5b5b5" stroke-width="0.8"/>
<text x="51.8" y="575" font-family="Liberation Sans" font-size="8.4" fill="#222">Normal View</text>
<text x="121.6" y="575" font-family="Liberation Sans" font-size="8.4" fill="#222">Select destination and press ENTER or choose Paste</text>
<text x="511.6" y="575" font-family="Liberation Sans" font-size="8.4" fill="#222">Sum = 0</text>
<rect x="600" y="569" width="6" height="2" fill="#333"/>
<!-- view buttons -->
<rect x="1.5" y="556" width="46" height="18" rx="3" fill="#ececec" stroke="#9a9a9a" stroke-width="0.8"/>
<rect x="2.5" y="557" width="23" height="16" rx="2" fill="url(#gvb)"/>
<rect x="8.7" y="561" width="11.5" height="10" fill="#4a9ad8"/>
<path d="M8.7 562.5h11.5M8.7 564.5h11.5M8.7 566.5h11.5M8.7 568.5h11.5M11.2 561v10M13.5 561v10M15.8 561v10M18.1 561v10" stroke="#9ad6f2" stroke-width="0.7"/>
<rect x="28.5" y="560.5" width="6" height="10" rx="1" fill="#f4f4f4" stroke="#555" stroke-width="0.8"/>
<rect x="36.5" y="560.5" width="6" height="10" rx="1" fill="#f4f4f4" stroke="#555" stroke-width="0.8"/>
<path d="M28.5 563.5h6M28.5 566.5h6M31.5 560.5v10M36.5 563.5h6M36.5 566.5h6M39.5 560.5v10" stroke="#777" stroke-width="0.6"/>
<!-- nav -->
<rect x="48.8" y="553.5" width="50" height="11" fill="url(#gnav)"/>
<path d="M98.8 553.5v11" stroke="#b0b0b0" stroke-width="0.8"/>
<path d="M56 555.6v5M61.5 555.6l-4 2.5 4 2.5z M70 555.6l-4 2.5 4 2.5z M77 555.6l4 2.5-4 2.5z M85.5 555.6l4 2.5-4 2.5z M90.5 555.6v5" stroke="#333" stroke-width="0.8" fill="#333"/>
<!-- tabs -->
<path d="M226 553.5h84l-3 10.5h-79z" fill="url(#gtg)" stroke="#8a8a8a" stroke-width="0.6"/>
<path d="M154 553.5h72l-3 10.5h-67z" fill="url(#gtg)" stroke="#8a8a8a" stroke-width="0.6"/>
<path d="M591 553.5h62v10.5h-60z" fill="url(#gtl)" stroke="#6a9aa8" stroke-width="0.6"/>
<path d="M511 553.5h82l-3 10.5h-77z" fill="url(#gtd)" stroke="#2e5f6c" stroke-width="0.6"/>
<path d="M395 553.5h118l-3 10.5h-113z" fill="url(#gtd)" stroke="#2e5f6c" stroke-width="0.6"/>
<path d="M310 553.5h87l-3 10.5h-82z" fill="url(#gtl)" stroke="#6a9aa8" stroke-width="0.6"/>
<path d="M99 553.2h56.5l-3 10.8h-50z" fill="url(#gtw)" stroke="#8a8a8a" stroke-width="0.6"/>
<text x="107.6" y="561.6" font-family="Liberation Sans" font-weight="bold" font-size="8.6" fill="#111" textLength="41.2" lengthAdjust="spacingAndGlyphs">Dashboard</text>
<text x="162.3" y="561.6" font-family="Liberation Sans" font-size="8.4" fill="#111" textLength="53.8" lengthAdjust="spacingAndGlyphs">Raw Data Menu</text>
<text x="231.8" y="561.6" font-family="Liberation Sans" font-size="8.4" fill="#111" textLength="69.2" lengthAdjust="spacingAndGlyphs">Data Validation List</text>
<text x="317.5" y="561.6" font-family="Liberation Sans" font-size="8.4" fill="#111" textLength="68.5" lengthAdjust="spacingAndGlyphs">Population Analysis</text>
<text x="403.7" y="561.6" font-family="Liberation Sans" font-size="8.4" fill="#fff" textLength="100.9" lengthAdjust="spacingAndGlyphs">Population Growth 1985&#8211;10</text>
<text x="520" y="561.6" font-family="Liberation Sans" font-size="8.4" fill="#fff" textLength="63.4" lengthAdjust="spacingAndGlyphs">Population by Sex</text>
<svg x="591" y="553" width="61" height="12" viewBox="591 553 61 12" overflow="hidden"><text x="600" y="561.6" font-family="Liberation Sans" font-size="8.4" fill="#111" textLength="56" lengthAdjust="spacingAndGlyphs">Female to Male</text></svg>
<!-- scrollbar -->
<rect x="653" y="553.5" width="164" height="11" fill="#ececec"/>
<rect x="656" y="555.5" width="170" height="7.5" rx="3.7" fill="#c9c9c9" stroke="#a8a8a8" stroke-width="0.6"/>
<rect x="658" y="556.5" width="170" height="3" rx="1.5" fill="#e2e2e2"/>
</svg>

</body></html>
